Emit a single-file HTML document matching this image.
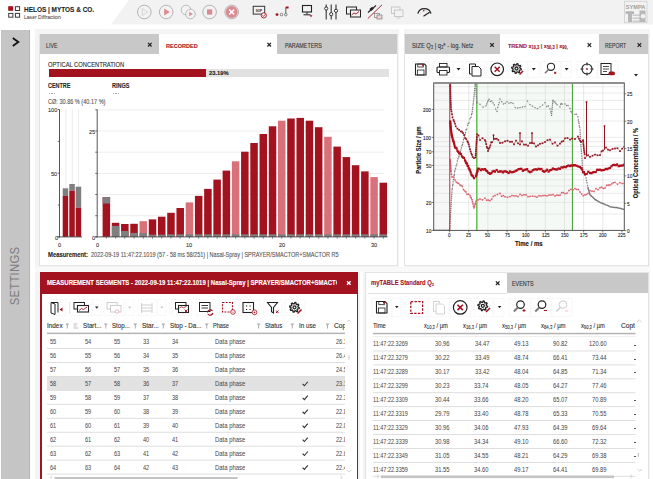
<!DOCTYPE html><html><head><meta charset="utf-8"><style>
*{margin:0;padding:0;box-sizing:border-box}
html,body{width:653px;height:479px;overflow:hidden;background:#fff;font-family:"Liberation Sans",sans-serif;color:#333}
.ab{position:absolute}
.t{position:absolute;white-space:nowrap;line-height:1;transform-origin:0 0;-webkit-text-stroke:0.1px currentColor}
svg{position:absolute;overflow:visible}
</style></head><body>
<svg class="ab" style="left:0;top:0" width="653" height="29"><polygon points="129,0 653,0 653,24.5 111,24.5" fill="#f2f2f2"/></svg><svg style="left:0;top:0" width="30" height="20">
<rect x="8.2" y="6.2" width="5" height="4.6" fill="#a2121f"/>
<rect x="15.4" y="6.7" width="4.2" height="3.8" fill="none" stroke="#3a3a3a" stroke-width="1"/>
<rect x="8.7" y="13.4" width="4.2" height="3.8" fill="none" stroke="#3a3a3a" stroke-width="1"/>
<rect x="15.4" y="13.4" width="4.2" height="3.8" fill="none" stroke="#3a3a3a" stroke-width="1"/>
</svg><div class="t" style="left:24.28px;top:6.19px;font-size:6.983px;color:#1e1e1e;font-weight:bold;transform:scaleX(0.925);">HELOS | MYTOS &amp; CO.</div><div class="t" style="left:23.89px;top:13.70px;font-size:6.145px;color:#555;transform:scaleX(0.825);">Laser Diffraction</div><svg style="left:624px;top:1px" width="24" height="22">
<rect x="0.5" y="0.3" width="22.5" height="21.4" fill="none" stroke="#d2d2d2" stroke-width="0.9"/>
<text x="11.6" y="8.3" font-size="5.2" text-anchor="middle" fill="#a0a0a0" font-family="Liberation Sans" font-weight="bold" textLength="19.5" lengthAdjust="spacingAndGlyphs">SYMPA</text>
<rect x="1.6" y="10.4" width="8.4" height="2.4" fill="#b0b0b0"/><rect x="4" y="10.4" width="4" height="10.6" fill="#b8b8b8"/>
<rect x="8.5" y="13.5" width="7.5" height="1.3" fill="#c4c4c4"/><rect x="8.5" y="16.5" width="7.5" height="1.3" fill="#c4c4c4"/><rect x="8.5" y="19.5" width="7.5" height="1.3" fill="#c4c4c4"/>
<rect x="15.5" y="9.5" width="6" height="11.5" fill="#b8b8b8"/><circle cx="19" cy="15.2" r="2.3" fill="#f2f2f2"/>
</svg><svg style="left:0;top:0" width="653" height="26"><circle cx="144.3" cy="12" r="6.8" fill="none" stroke="#b4b4b4" stroke-width="1"/><circle cx="166.2" cy="12" r="6.8" fill="none" stroke="#b4b4b4" stroke-width="1"/><circle cx="209.6" cy="12" r="6.8" fill="none" stroke="#b4b4b4" stroke-width="1"/><circle cx="231.7" cy="12" r="6.8" fill="none" stroke="#b4b4b4" stroke-width="1"/><polygon points="142.3,8.5 147.6,12 142.3,15.5" fill="none" stroke="#d0d0d0" stroke-width="0.8"/><polygon points="164.2,8.6 169.8,12 164.2,15.4" fill="#d98a93"/><circle cx="186" cy="10" r="4.8" fill="none" stroke="#b4b4b4" stroke-width="0.9"/><circle cx="190.5" cy="14" r="4.8" fill="#f2f2f2" stroke="#b4b4b4" stroke-width="0.9"/><polygon points="189.2,11.8 192.8,14 189.2,16.2" fill="#d98a93"/><rect x="207" y="9.4" width="5.2" height="5.2" fill="#d98a93"/><circle cx="231.7" cy="12" r="6" fill="#d98a93"/><path d="M229.2,9.5 L234.2,14.5 M234.2,9.5 L229.2,14.5" stroke="#fff" stroke-width="1.6"/><rect x="253.2" y="6.3" width="11.5" height="7.8" fill="none" stroke="#333" stroke-width="1"/><text x="258.9" y="11.6" font-size="3.6" text-anchor="middle" fill="#222" font-weight="bold" font-family="Liberation Sans" textLength="6.5" lengthAdjust="spacingAndGlyphs">SOP</text><circle cx="263.8" cy="15.4" r="2.6" fill="#f2f2f2" stroke="#a2121f" stroke-width="0.9"/><path d="M262.5,15.4 l1,1 l1.7,-1.9" stroke="#a2121f" fill="none" stroke-width="0.8"/><circle cx="277" cy="14.6" r="1.4" fill="#a2121f"/><circle cx="281.5" cy="14.6" r="1.3" fill="none" stroke="#555" stroke-width="0.7"/><circle cx="285.8" cy="14.6" r="1.3" fill="none" stroke="#555" stroke-width="0.7"/><path d="M285.8,13.2 V7" stroke="#333" stroke-width="0.8"/><path d="M286,6.5 h2.6 v2 h-2.6z" fill="#a2121f"/><rect x="302.5" y="5.5" width="9" height="6.5" fill="none" stroke="#222" stroke-width="1.1"/><path d="M307,12 v2.5 M303.5,14.8 h7" stroke="#222" stroke-width="1"/><path d="M309.5,15.2 h3 l-1.5,2z" fill="#a2121f"/><path d="M326.2,4.5 v15 M331.2,4.5 v15 M336,4.5 v15" stroke="#222" stroke-width="1"/><circle cx="326.2" cy="8.5" r="1.6" fill="#fff" stroke="#222" stroke-width="0.9"/><circle cx="331.2" cy="14.2" r="1.6" fill="#fff" stroke="#222" stroke-width="0.9"/><circle cx="336" cy="10.8" r="1.6" fill="#fff" stroke="#222" stroke-width="0.9"/><rect x="346.5" y="7" width="10" height="7" fill="none" stroke="#222" stroke-width="1"/><rect x="350.5" y="10" width="10" height="7" fill="#f2f2f2" stroke="#222" stroke-width="1"/><path d="M351.5,15 l2.5,-2 l2,1 l3,-2.5" stroke="#a2121f" fill="none" stroke-width="0.9"/><path d="M368,12.5 l8,-7" stroke="#222" stroke-width="1.1"/><rect x="369.8" y="7.6" width="3.6" height="2.6" transform="rotate(-41 371.6 8.9)" fill="#222"/><path d="M367.8,18.6 l14.2,-13.8" stroke="#a2121f" stroke-width="0.9"/><rect x="374.5" y="13.5" width="5" height="4" fill="#f2f2f2" stroke="#888" stroke-width="0.8"/><rect x="377" y="15" width="5" height="4" fill="#f3d0d4" stroke="#888" stroke-width="0.8"/><rect x="391.5" y="7" width="8.5" height="6.5" fill="none" stroke="#c4c4c4" stroke-width="0.9"/><rect x="394.5" y="10" width="8.5" height="6.5" fill="#f2f2f2" stroke="#c4c4c4" stroke-width="0.9"/><path d="M396.5,18 h4" stroke="#c4c4c4" stroke-width="0.8"/><path d="M417.8,13.6 A6.9,6.9 0 0 1 431,13.6" fill="none" stroke="#222" stroke-width="1.2"/><path d="M420.2,14.2 A4.6,4.6 0 0 1 428.8,13" fill="none" stroke="#bbb" stroke-width="0.7" stroke-dasharray="0.8,0.8"/><circle cx="423.8" cy="10.8" r="0.8" fill="#a2121f"/><path d="M423.5,16.2 L429.6,12.2" stroke="#222" stroke-width="1.2"/></svg><div class="ab" style="left:1px;top:30px;width:29px;height:449px;background:#c5c5c5;"></div><div class="ab" style="left:29px;top:30px;width:1px;height:449px;background:#b4b4b4;"></div><svg style="left:0;top:0" width="40" height="60"><polyline points="12.8,38 18.3,42 12.8,46" fill="none" stroke="#111" stroke-width="1.8"/></svg><div class="t" style="left:14.5px;top:276px;font-size:13.5px;color:#7d7d7d;transform:translate(-50%,-50%) rotate(-90deg) scaleX(0.84);transform-origin:50% 50%;letter-spacing:0.3px;-webkit-text-stroke:0">SETTINGS</div><div class="ab" style="left:35px;top:29px;width:364px;height:239px;background:#f4f4f4;"></div><div class="ab" style="left:404px;top:29px;width:246px;height:239px;background:#f4f4f4;"></div><div class="ab" style="left:35px;top:268px;width:325px;height:211px;background:#f4f4f4;"></div><div class="ab" style="left:363px;top:268px;width:287px;height:211px;background:#f4f4f4;"></div><div class="ab" style="left:35px;top:266.5px;width:615px;height:5px;background:#f9f9f9;"></div><div class="ab" style="left:39.3px;top:33.5px;width:358.4px;height:232px;background:#fff;border:1px solid #e3e3e3"></div><div class="ab" style="left:404.3px;top:33.5px;width:244.5px;height:232px;background:#fff;border:1px solid #e3e3e3"></div><div class="ab" style="left:40px;top:272px;width:318px;height:207px;background:#fff;"></div><div class="ab" style="left:365.3px;top:271.5px;width:283.5px;height:210px;background:#fff;border:1px solid #e3e3e3"></div><div class="ab" style="left:40px;top:34px;width:119px;height:20px;background:#c8c8c8;"></div><div class="ab" style="left:159px;top:34px;width:118.3px;height:20px;background:#fff;"></div><div class="ab" style="left:277.3px;top:34px;width:119.7px;height:20px;background:#c8c8c8;"></div><div class="t" style="left:46.47px;top:42.88px;font-size:6.285px;color:#333;transform:scaleX(0.854);">LIVE</div><svg style="left:0;top:0" width="1" height="1"><path d="M148.0,42.900000000000006 L151.60000000000002,46.5 M151.60000000000002,42.900000000000006 L148.0,46.5" stroke="#222" stroke-width="1.2"/></svg><div class="t" style="left:165.64px;top:42.90px;font-size:6.145px;color:#a2121f;font-weight:bold;transform:scaleX(0.904);">RECORDED</div><svg style="left:0;top:0" width="1" height="1"><path d="M267.4,42.900000000000006 L271.0,46.5 M271.0,42.900000000000006 L267.4,46.5" stroke="#222" stroke-width="1.2"/></svg><div class="t" style="left:284.67px;top:42.88px;font-size:6.285px;color:#333;transform:scaleX(0.862);">PARAMETERS</div><div class="ab" style="left:405px;top:34px;width:95.3px;height:20px;background:#c8c8c8;"></div><div class="ab" style="left:500.3px;top:34px;width:98.7px;height:20px;background:#fff;"></div><div class="ab" style="left:599px;top:34px;width:49px;height:20px;background:#c8c8c8;"></div><div class="t" style="left:411.68px;top:42.86px;font-size:6.425px;color:#333;transform:scaleX(0.897);">SIZE Q<span style="font-size:72%;vertical-align:-1px">3</span> | q<span style="font-size:72%;vertical-align:-1px">3</span>* - log. Netz</div><svg style="left:0;top:0" width="1" height="1"><path d="M490.2,43.2 L493.8,46.8 M493.8,43.2 L490.2,46.8" stroke="#222" stroke-width="1.2"/></svg><div class="t" style="left:508.26px;top:42.90px;font-size:6.145px;color:#a2121f;font-weight:bold;transform:scaleX(0.898);">TREND x<span style="font-size:72%;vertical-align:-1px">10,3</span> | x<span style="font-size:72%;vertical-align:-1px">50,3</span> | x<span style="font-size:72%;vertical-align:-1px">90,</span></div><svg style="left:0;top:0" width="1" height="1"><path d="M587.6,43.2 L591.1999999999999,46.8 M591.1999999999999,43.2 L587.6,46.8" stroke="#222" stroke-width="1.2"/></svg><div class="t" style="left:604.59px;top:42.88px;font-size:6.285px;color:#333;transform:scaleX(0.814);">REPORT</div><svg style="left:0;top:0" width="1" height="1"><path d="M637.6,43.2 L641.1999999999999,46.8 M641.1999999999999,43.2 L637.6,46.8" stroke="#222" stroke-width="1.2"/></svg><div class="t" style="left:48.14px;top:61.83px;font-size:6.704px;color:#2a2a2a;transform:scaleX(0.864);">OPTICAL CONCENTRATION</div><div class="ab" style="left:48.9px;top:69px;width:157.2px;height:7.9px;background:#a2121f;"></div><div class="ab" style="left:206.1px;top:69.1px;width:182.8px;height:7.8px;background:#e1e1e1;"></div><div class="t" style="left:209.11px;top:70.40px;font-size:6.145px;color:#1a1a1a;font-weight:bold;transform:scaleX(0.940);">23.19%</div><div class="t" style="left:48.18px;top:83.08px;font-size:6.285px;color:#2a2a2a;font-weight:bold;transform:scaleX(0.872);">CENTRE</div><div class="t" style="left:112.45px;top:83.08px;font-size:6.285px;color:#2a2a2a;font-weight:bold;transform:scaleX(0.883);">RINGS</div><div class="ab" style="left:48.6px;top:93.1px;width:1.6px;height:1.0px;background:#a8a8a8;"></div><div class="ab" style="left:51.1px;top:93.1px;width:1.6px;height:1.0px;background:#a8a8a8;"></div><div class="ab" style="left:53.6px;top:93.1px;width:1.6px;height:1.0px;background:#a8a8a8;"></div><div class="ab" style="left:112.9px;top:93.1px;width:1.6px;height:1.0px;background:#a8a8a8;"></div><div class="ab" style="left:115.4px;top:93.1px;width:1.6px;height:1.0px;background:#a8a8a8;"></div><div class="ab" style="left:117.9px;top:93.1px;width:1.6px;height:1.0px;background:#a8a8a8;"></div><div class="t" style="left:48.14px;top:99.46px;font-size:6.425px;color:#555;transform:scaleX(0.867);">CØ: 30.86 % (40.17 %)</div><svg style="left:0;top:0" width="653" height="479"><line x1="65.9" y1="109.4" x2="65.9" y2="236.9" stroke="#e6e6e6" stroke-width="0.8"/><line x1="72.3" y1="109.4" x2="72.3" y2="236.9" stroke="#e6e6e6" stroke-width="0.8"/><line x1="78.6" y1="109.4" x2="78.6" y2="236.9" stroke="#e6e6e6" stroke-width="0.8"/><rect x="62.7" y="188.3" width="5.5" height="7.699999999999989" fill="#7f7f7f"/><rect x="62.7" y="196" width="5.5" height="40.900000000000006" fill="#a2121f"/><rect x="69.3" y="184" width="5.5" height="6.699999999999989" fill="#7f7f7f"/><rect x="69.3" y="190.7" width="5.5" height="46.20000000000002" fill="#a2121f"/><rect x="75.7" y="186.7" width="5.5" height="21.0" fill="#7f7f7f"/><rect x="75.7" y="207.7" width="5.5" height="29.200000000000017" fill="#a2121f"/><line x1="59.5" y1="109.4" x2="59.5" y2="237.4" stroke="#444" stroke-width="0.9"/><line x1="57.5" y1="236.9" x2="82" y2="236.9" stroke="#444" stroke-width="0.9"/><line x1="57.8" y1="109.5" x2="59.5" y2="109.5" stroke="#444" stroke-width="0.8"/><line x1="57.8" y1="141.35000000000002" x2="59.5" y2="141.35000000000002" stroke="#444" stroke-width="0.8"/><line x1="57.8" y1="173.2" x2="59.5" y2="173.2" stroke="#444" stroke-width="0.8"/><line x1="57.8" y1="205.05" x2="59.5" y2="205.05" stroke="#444" stroke-width="0.8"/><line x1="57.8" y1="236.9" x2="59.5" y2="236.9" stroke="#444" stroke-width="0.8"/><line x1="98" y1="215.72" x2="384" y2="215.72" stroke="#e8e8e8" stroke-width="0.8"/><line x1="98" y1="194.54" x2="384" y2="194.54" stroke="#e8e8e8" stroke-width="0.8"/><line x1="98" y1="173.36" x2="384" y2="173.36" stroke="#e8e8e8" stroke-width="0.8"/><line x1="98" y1="152.18" x2="384" y2="152.18" stroke="#e8e8e8" stroke-width="0.8"/><line x1="98" y1="131.00" x2="384" y2="131.00" stroke="#e8e8e8" stroke-width="0.8"/><line x1="98" y1="109.82" x2="384" y2="109.82" stroke="#e8e8e8" stroke-width="0.8"/><rect x="102.60" y="197.10" width="7.5" height="39.80" fill="#a2121f"/><rect x="102.60" y="197.1" width="7.5" height="6.4" fill="#7f7f7f"/><line x1="106.35" y1="236.9" x2="106.35" y2="238.70000000000002" stroke="#555" stroke-width="0.7"/><rect x="111.83" y="222.80" width="7.5" height="14.10" fill="#a2121f"/><rect x="111.83" y="225.90" width="7.5" height="11.00" fill="#7f7f7f"/><line x1="115.58" y1="236.9" x2="115.58" y2="238.70000000000002" stroke="#555" stroke-width="0.7"/><rect x="121.06" y="224.00" width="7.5" height="12.90" fill="#a2121f"/><rect x="121.06" y="231.00" width="7.5" height="5.90" fill="#7f7f7f"/><line x1="124.81" y1="236.9" x2="124.81" y2="238.70000000000002" stroke="#555" stroke-width="0.7"/><rect x="130.30" y="223.80" width="7.5" height="13.10" fill="#a2121f"/><rect x="130.30" y="232.90" width="7.5" height="4.00" fill="#7f7f7f"/><line x1="134.05" y1="236.9" x2="134.05" y2="238.70000000000002" stroke="#555" stroke-width="0.7"/><rect x="139.53" y="221.20" width="7.5" height="15.70" fill="#d9717b"/><rect x="139.53" y="233.10" width="7.5" height="3.80" fill="#7f7f7f"/><line x1="143.28" y1="236.9" x2="143.28" y2="238.70000000000002" stroke="#555" stroke-width="0.7"/><rect x="148.76" y="219.40" width="7.5" height="17.50" fill="#a2121f"/><rect x="148.76" y="234.70" width="7.5" height="2.20" fill="#7f7f7f"/><line x1="152.51" y1="236.9" x2="152.51" y2="238.70000000000002" stroke="#555" stroke-width="0.7"/><rect x="157.99" y="216.70" width="7.5" height="20.20" fill="#a2121f"/><rect x="157.99" y="234.70" width="7.5" height="2.20" fill="#7f7f7f"/><line x1="161.74" y1="236.9" x2="161.74" y2="238.70000000000002" stroke="#555" stroke-width="0.7"/><rect x="167.22" y="212.80" width="7.5" height="24.10" fill="#a2121f"/><rect x="167.22" y="234.30" width="7.5" height="2.60" fill="#7f7f7f"/><line x1="170.97" y1="236.9" x2="170.97" y2="238.70000000000002" stroke="#555" stroke-width="0.7"/><rect x="176.46" y="208.00" width="7.5" height="28.90" fill="#a2121f"/><rect x="176.46" y="234.30" width="7.5" height="2.60" fill="#7f7f7f"/><line x1="180.21" y1="236.9" x2="180.21" y2="238.70000000000002" stroke="#555" stroke-width="0.7"/><rect x="185.69" y="202.40" width="7.5" height="34.50" fill="#d9717b"/><rect x="185.69" y="234.30" width="7.5" height="2.60" fill="#7f7f7f"/><line x1="189.44" y1="236.9" x2="189.44" y2="238.70000000000002" stroke="#555" stroke-width="0.7"/><rect x="194.92" y="195.90" width="7.5" height="41.00" fill="#a2121f"/><rect x="194.92" y="234.30" width="7.5" height="2.60" fill="#7f7f7f"/><line x1="198.67" y1="236.9" x2="198.67" y2="238.70000000000002" stroke="#555" stroke-width="0.7"/><rect x="204.15" y="188.90" width="7.5" height="48.00" fill="#a2121f"/><rect x="204.15" y="234.30" width="7.5" height="2.60" fill="#7f7f7f"/><line x1="207.90" y1="236.9" x2="207.90" y2="238.70000000000002" stroke="#555" stroke-width="0.7"/><rect x="213.38" y="179.60" width="7.5" height="57.30" fill="#a2121f"/><rect x="213.38" y="234.30" width="7.5" height="2.60" fill="#7f7f7f"/><line x1="217.13" y1="236.9" x2="217.13" y2="238.70000000000002" stroke="#555" stroke-width="0.7"/><rect x="222.62" y="170.60" width="7.5" height="66.30" fill="#a2121f"/><rect x="222.62" y="234.30" width="7.5" height="2.60" fill="#7f7f7f"/><line x1="226.37" y1="236.9" x2="226.37" y2="238.70000000000002" stroke="#555" stroke-width="0.7"/><rect x="231.85" y="161.30" width="7.5" height="75.60" fill="#d9717b"/><rect x="231.85" y="234.30" width="7.5" height="2.60" fill="#7f7f7f"/><line x1="235.60" y1="236.9" x2="235.60" y2="238.70000000000002" stroke="#555" stroke-width="0.7"/><rect x="241.08" y="151.70" width="7.5" height="85.20" fill="#a2121f"/><rect x="241.08" y="234.30" width="7.5" height="2.60" fill="#7f7f7f"/><line x1="244.83" y1="236.9" x2="244.83" y2="238.70000000000002" stroke="#555" stroke-width="0.7"/><rect x="250.31" y="143.00" width="7.5" height="93.90" fill="#a2121f"/><rect x="250.31" y="234.30" width="7.5" height="2.60" fill="#7f7f7f"/><line x1="254.06" y1="236.9" x2="254.06" y2="238.70000000000002" stroke="#555" stroke-width="0.7"/><rect x="259.54" y="134.00" width="7.5" height="102.90" fill="#a2121f"/><rect x="259.54" y="234.30" width="7.5" height="2.60" fill="#7f7f7f"/><line x1="263.29" y1="236.9" x2="263.29" y2="238.70000000000002" stroke="#555" stroke-width="0.7"/><rect x="268.78" y="126.30" width="7.5" height="110.60" fill="#a2121f"/><rect x="268.78" y="234.30" width="7.5" height="2.60" fill="#7f7f7f"/><line x1="272.53" y1="236.9" x2="272.53" y2="238.70000000000002" stroke="#555" stroke-width="0.7"/><rect x="278.01" y="120.70" width="7.5" height="116.20" fill="#d9717b"/><rect x="278.01" y="234.30" width="7.5" height="2.60" fill="#7f7f7f"/><line x1="281.76" y1="236.9" x2="281.76" y2="238.70000000000002" stroke="#555" stroke-width="0.7"/><rect x="287.24" y="118.50" width="7.5" height="118.40" fill="#a2121f"/><rect x="287.24" y="234.30" width="7.5" height="2.60" fill="#7f7f7f"/><line x1="290.99" y1="236.9" x2="290.99" y2="238.70000000000002" stroke="#555" stroke-width="0.7"/><rect x="296.47" y="117.90" width="7.5" height="119.00" fill="#a2121f"/><rect x="296.47" y="234.30" width="7.5" height="2.60" fill="#7f7f7f"/><line x1="300.22" y1="236.9" x2="300.22" y2="238.70000000000002" stroke="#555" stroke-width="0.7"/><rect x="305.70" y="120.70" width="7.5" height="116.20" fill="#a2121f"/><rect x="305.70" y="234.30" width="7.5" height="2.60" fill="#7f7f7f"/><line x1="309.45" y1="236.9" x2="309.45" y2="238.70000000000002" stroke="#555" stroke-width="0.7"/><rect x="314.94" y="127.20" width="7.5" height="109.70" fill="#a2121f"/><rect x="314.94" y="234.30" width="7.5" height="2.60" fill="#7f7f7f"/><line x1="318.69" y1="236.9" x2="318.69" y2="238.70000000000002" stroke="#555" stroke-width="0.7"/><rect x="324.17" y="136.80" width="7.5" height="100.10" fill="#d9717b"/><rect x="324.17" y="234.30" width="7.5" height="2.60" fill="#7f7f7f"/><line x1="327.92" y1="236.9" x2="327.92" y2="238.70000000000002" stroke="#555" stroke-width="0.7"/><rect x="333.40" y="146.60" width="7.5" height="90.30" fill="#a2121f"/><rect x="333.40" y="234.30" width="7.5" height="2.60" fill="#7f7f7f"/><line x1="337.15" y1="236.9" x2="337.15" y2="238.70000000000002" stroke="#555" stroke-width="0.7"/><rect x="342.63" y="157.10" width="7.5" height="79.80" fill="#a2121f"/><rect x="342.63" y="234.30" width="7.5" height="2.60" fill="#7f7f7f"/><line x1="346.38" y1="236.9" x2="346.38" y2="238.70000000000002" stroke="#555" stroke-width="0.7"/><rect x="351.86" y="165.20" width="7.5" height="71.70" fill="#a2121f"/><rect x="351.86" y="234.30" width="7.5" height="2.60" fill="#7f7f7f"/><line x1="355.61" y1="236.9" x2="355.61" y2="238.70000000000002" stroke="#555" stroke-width="0.7"/><rect x="361.10" y="171.40" width="7.5" height="65.50" fill="#a2121f"/><rect x="361.10" y="234.30" width="7.5" height="2.60" fill="#7f7f7f"/><line x1="364.85" y1="236.9" x2="364.85" y2="238.70000000000002" stroke="#555" stroke-width="0.7"/><rect x="370.33" y="177.10" width="7.5" height="59.80" fill="#d9717b"/><rect x="370.33" y="234.30" width="7.5" height="2.60" fill="#7f7f7f"/><line x1="374.08" y1="236.9" x2="374.08" y2="238.70000000000002" stroke="#555" stroke-width="0.7"/><rect x="379.56" y="182.70" width="7.5" height="54.20" fill="#a2121f"/><rect x="379.56" y="234.30" width="7.5" height="2.60" fill="#7f7f7f"/><line x1="383.31" y1="236.9" x2="383.31" y2="238.70000000000002" stroke="#555" stroke-width="0.7"/><line x1="97.2" y1="109.4" x2="97.2" y2="237.4" stroke="#444" stroke-width="0.9"/><line x1="95" y1="236.9" x2="387.5" y2="236.9" stroke="#444" stroke-width="0.9"/><line x1="95.3" y1="236.90" x2="97.2" y2="236.90" stroke="#444" stroke-width="0.8"/><line x1="95.3" y1="215.72" x2="97.2" y2="215.72" stroke="#444" stroke-width="0.8"/><line x1="95.3" y1="194.54" x2="97.2" y2="194.54" stroke="#444" stroke-width="0.8"/><line x1="95.3" y1="173.36" x2="97.2" y2="173.36" stroke="#444" stroke-width="0.8"/><line x1="95.3" y1="152.18" x2="97.2" y2="152.18" stroke="#444" stroke-width="0.8"/><line x1="95.3" y1="131.00" x2="97.2" y2="131.00" stroke="#444" stroke-width="0.8"/><line x1="95.3" y1="109.82" x2="97.2" y2="109.82" stroke="#444" stroke-width="0.8"/></svg><div class="t" style="left:48.17px;top:107.10px;font-size:6.145px;color:#333;transform:scaleX(0.900);">100</div><div class="t" style="left:51.24px;top:170.50px;font-size:6.145px;color:#333;transform:scaleX(0.900);">50</div><div class="t" style="left:54.62px;top:234.70px;font-size:6.145px;color:#333;transform:scaleX(0.900);">0</div><div class="t" style="left:89.24px;top:128.60px;font-size:6.145px;color:#333;transform:scaleX(0.900);">25</div><div class="t" style="left:92.12px;top:234.70px;font-size:6.145px;color:#333;transform:scaleX(0.900);">0</div><div class="t" style="left:57.97px;top:242.40px;font-size:6.145px;color:#333;transform:scaleX(0.900);">0</div><div class="t" style="left:95.67px;top:242.40px;font-size:6.145px;color:#333;transform:scaleX(0.900);">0</div><div class="t" style="left:186.32px;top:242.40px;font-size:6.145px;color:#333;transform:scaleX(0.900);">10</div><div class="t" style="left:278.69px;top:242.40px;font-size:6.145px;color:#333;transform:scaleX(0.900);">20</div><div class="t" style="left:371.03px;top:242.40px;font-size:6.145px;color:#333;transform:scaleX(0.900);">30</div><div class="t" style="left:48.32px;top:252.28px;font-size:6.285px;color:#222;font-weight:bold;transform:scaleX(0.942);">Measurement:</div><div class="t" style="left:91.34px;top:252.28px;font-size:6.285px;color:#555;transform:scaleX(0.879);">2022-09-19 11:47:22.1019 (57 - 58 ms 58/251) | Nasal-Spray | SPRAYER/SMACTOR+SMACTOR R5</div><svg style="left:0;top:0" width="653" height="479"><defs><clipPath id="cc"><rect x="433.7" y="83.0" width="190.59999999999997" height="147.4"/></clipPath></defs><rect x="433.7" y="83.0" width="15.900000000000034" height="147.4" fill="#f6f7f6"/><rect x="477.5" y="83.0" width="94.89999999999998" height="147.4" fill="#f5f9f5"/><line x1="433.7" y1="214.02" x2="624.3" y2="214.02" stroke="#dcdcdc" stroke-width="0.6"/><line x1="433.7" y1="202.40" x2="624.3" y2="202.40" stroke="#dcdcdc" stroke-width="0.6"/><line x1="433.7" y1="193.39" x2="624.3" y2="193.39" stroke="#dcdcdc" stroke-width="0.6"/><line x1="433.7" y1="186.03" x2="624.3" y2="186.03" stroke="#dcdcdc" stroke-width="0.6"/><line x1="433.7" y1="179.80" x2="624.3" y2="179.80" stroke="#dcdcdc" stroke-width="0.6"/><line x1="433.7" y1="174.41" x2="624.3" y2="174.41" stroke="#dcdcdc" stroke-width="0.6"/><line x1="433.7" y1="169.65" x2="624.3" y2="169.65" stroke="#dcdcdc" stroke-width="0.6"/><line x1="433.7" y1="165.40" x2="624.3" y2="165.40" stroke="#dcdcdc" stroke-width="0.6"/><line x1="433.7" y1="158.03" x2="624.3" y2="158.03" stroke="#dcdcdc" stroke-width="0.6"/><line x1="433.7" y1="151.81" x2="624.3" y2="151.81" stroke="#dcdcdc" stroke-width="0.6"/><line x1="433.7" y1="146.41" x2="624.3" y2="146.41" stroke="#dcdcdc" stroke-width="0.6"/><line x1="433.7" y1="141.66" x2="624.3" y2="141.66" stroke="#dcdcdc" stroke-width="0.6"/><line x1="433.7" y1="137.40" x2="624.3" y2="137.40" stroke="#dcdcdc" stroke-width="0.6"/><line x1="433.7" y1="121.02" x2="624.3" y2="121.02" stroke="#dcdcdc" stroke-width="0.6"/><line x1="433.7" y1="109.40" x2="624.3" y2="109.40" stroke="#dcdcdc" stroke-width="0.6"/><line x1="433.7" y1="100.39" x2="624.3" y2="100.39" stroke="#dcdcdc" stroke-width="0.6"/><line x1="433.7" y1="93.03" x2="624.3" y2="93.03" stroke="#dcdcdc" stroke-width="0.6"/><line x1="433.7" y1="86.80" x2="624.3" y2="86.80" stroke="#dcdcdc" stroke-width="0.6"/><line x1="468.75" y1="83.0" x2="468.75" y2="230.4" stroke="#d6d6d6" stroke-width="0.6"/><line x1="487.90" y1="83.0" x2="487.90" y2="230.4" stroke="#d6d6d6" stroke-width="0.6"/><line x1="507.05" y1="83.0" x2="507.05" y2="230.4" stroke="#d6d6d6" stroke-width="0.6"/><line x1="526.20" y1="83.0" x2="526.20" y2="230.4" stroke="#d6d6d6" stroke-width="0.6"/><line x1="545.35" y1="83.0" x2="545.35" y2="230.4" stroke="#d6d6d6" stroke-width="0.6"/><line x1="564.50" y1="83.0" x2="564.50" y2="230.4" stroke="#d6d6d6" stroke-width="0.6"/><line x1="583.65" y1="83.0" x2="583.65" y2="230.4" stroke="#d6d6d6" stroke-width="0.6"/><line x1="602.80" y1="83.0" x2="602.80" y2="230.4" stroke="#d6d6d6" stroke-width="0.6"/><line x1="476.8" y1="83.0" x2="476.8" y2="230.4" stroke="#6cbf5a" stroke-width="1.6"/><line x1="572.4" y1="83.0" x2="572.4" y2="230.4" stroke="#3f9d32" stroke-width="1"/><line x1="433.7" y1="230" x2="449.6" y2="230" stroke="#888" stroke-width="1.2" stroke-dasharray="1.2,0.6"/><g clip-path="url(#cc)" opacity="1"><path d="M449.60,230.00 L449.73,227.66 L449.86,225.73 L449.99,223.37 L450.11,221.39 L450.24,219.21 L450.37,216.91 L450.50,214.93 L450.62,212.67 L450.75,210.73 L450.88,208.51 L451.00,206.40 L451.12,204.47 L451.25,202.62 L451.38,200.27 L451.50,198.16 L451.62,196.26 L451.75,194.38 L451.88,192.19 L452.00,189.95 L452.30,188.55 L452.60,185.63 L452.90,184.31 L453.20,181.84 L453.50,179.53 L453.80,177.41 L454.10,175.59 L454.40,174.25 L454.70,171.70 L455.00,170.01 L455.60,168.32 L456.20,165.80 L456.80,164.05 L457.40,161.01 L458.00,158.75 L458.57,156.98 L459.14,156.09 L459.71,153.87 L460.29,151.55 L460.86,150.05 L461.43,147.91 L462.00,145.59 L462.50,144.45 L463.00,142.52 L463.50,139.66 L464.00,138.04 L464.50,136.06 L465.00,134.75 L465.50,132.67 L466.00,129.69 L466.75,129.26 L467.50,125.30 L468.25,123.56 L469.00,122.70 L470.00,118.86 L471.00,117.42 L471.50,114.59 L472.00,113.42 L472.25,111.56 L472.50,109.35 L472.75,107.50 L473.00,104.94 L473.25,103.09 L473.50,100.99 L473.75,98.89 L474.00,96.70 L474.19,94.85 L474.38,92.92 L474.56,90.54 L474.75,88.50 L474.94,85.99 L475.12,84.24 L475.31,82.21 L475.50,80.23 L475.61,82.30 L475.72,84.15 L475.83,86.21 L475.94,88.41 L476.06,90.26 L476.17,92.46 L476.28,94.46 L476.39,96.50 L476.50,98.42 L476.67,100.93 L476.83,102.71 L477.00,102.30 L480.00,104.36 L483.00,107.17 L486.00,105.80 L486.75,103.91 L487.50,101.96 L488.25,100.57 L489.00,99.23 L490.33,101.49 L491.67,100.97 L493.00,102.86 L494.33,104.82 L495.67,109.13 L497.00,111.48 L497.75,107.39 L498.50,104.74 L499.25,102.61 L500.00,98.90 L501.75,101.69 L503.50,103.99 L505.25,103.21 L507.00,101.65 L509.00,103.12 L511.00,102.61 L513.00,103.33 L515.33,107.70 L517.67,107.92 L520.00,107.56 L522.50,107.00 L525.00,106.59 L527.50,101.03 L530.00,104.66 L532.50,106.12 L535.00,107.66 L537.50,108.62 L540.00,106.89 L542.50,105.14 L545.00,102.60 L546.67,106.71 L548.33,105.87 L550.00,108.87 L550.75,111.98 L551.50,115.45 L551.69,113.53 L551.88,111.31 L552.06,109.17 L552.25,107.20 L552.44,105.14 L552.62,103.28 L552.81,101.04 L553.00,100.19 L554.00,101.90 L555.00,101.90 L556.00,103.58 L557.00,104.74 L560.00,107.01 L560.67,104.26 L561.33,103.53 L562.00,104.23 L565.00,103.92 L566.50,105.51 L568.00,105.47 L570.00,108.46 L571.00,111.57 L572.00,112.71 L575.00,114.37 L576.50,114.15 L578.00,116.80 L578.33,119.94 L578.67,121.81 L579.00,123.35 L579.33,125.77 L579.67,127.30 L580.00,129.94 L580.12,132.30 L580.25,134.41 L580.38,136.43 L580.50,138.29 L580.62,140.35 L580.75,142.34 L580.88,144.69 L581.00,146.75 L581.20,149.23 L581.40,151.29 L581.60,153.45 L581.80,156.13 L582.00,158.58 L582.14,160.81 L582.29,163.02 L582.43,165.26 L582.57,167.46 L582.71,169.43 L582.86,171.74 L583.00,173.38 L584.50,174.45 L586.00,177.96 L586.50,180.51 L587.00,182.74 L587.50,185.70 L588.00,187.70" fill="none" stroke="#c8c8c8" stroke-width="0.5" stroke-linejoin="round"/><rect x="449.00" y="229.40" width="1.2" height="1.2" fill="#7a7a7a"/><rect x="449.13" y="227.06" width="1.2" height="1.2" fill="#7a7a7a"/><rect x="449.26" y="225.13" width="1.2" height="1.2" fill="#7a7a7a"/><rect x="449.39" y="222.77" width="1.2" height="1.2" fill="#7a7a7a"/><rect x="449.51" y="220.79" width="1.2" height="1.2" fill="#7a7a7a"/><rect x="449.64" y="218.61" width="1.2" height="1.2" fill="#7a7a7a"/><rect x="449.77" y="216.31" width="1.2" height="1.2" fill="#7a7a7a"/><rect x="449.90" y="214.33" width="1.2" height="1.2" fill="#7a7a7a"/><rect x="450.02" y="212.07" width="1.2" height="1.2" fill="#7a7a7a"/><rect x="450.15" y="210.13" width="1.2" height="1.2" fill="#7a7a7a"/><rect x="450.27" y="207.91" width="1.2" height="1.2" fill="#7a7a7a"/><rect x="450.40" y="205.80" width="1.2" height="1.2" fill="#7a7a7a"/><rect x="450.52" y="203.87" width="1.2" height="1.2" fill="#7a7a7a"/><rect x="450.65" y="202.02" width="1.2" height="1.2" fill="#7a7a7a"/><rect x="450.77" y="199.67" width="1.2" height="1.2" fill="#7a7a7a"/><rect x="450.90" y="197.56" width="1.2" height="1.2" fill="#7a7a7a"/><rect x="451.02" y="195.66" width="1.2" height="1.2" fill="#7a7a7a"/><rect x="451.15" y="193.78" width="1.2" height="1.2" fill="#7a7a7a"/><rect x="451.27" y="191.59" width="1.2" height="1.2" fill="#7a7a7a"/><rect x="451.40" y="189.35" width="1.2" height="1.2" fill="#7a7a7a"/><rect x="451.70" y="187.95" width="1.2" height="1.2" fill="#7a7a7a"/><rect x="452.00" y="185.03" width="1.2" height="1.2" fill="#7a7a7a"/><rect x="452.30" y="183.71" width="1.2" height="1.2" fill="#7a7a7a"/><rect x="452.60" y="181.24" width="1.2" height="1.2" fill="#7a7a7a"/><rect x="452.90" y="178.93" width="1.2" height="1.2" fill="#7a7a7a"/><rect x="453.20" y="176.81" width="1.2" height="1.2" fill="#7a7a7a"/><rect x="453.50" y="174.99" width="1.2" height="1.2" fill="#7a7a7a"/><rect x="453.80" y="173.65" width="1.2" height="1.2" fill="#7a7a7a"/><rect x="454.10" y="171.10" width="1.2" height="1.2" fill="#7a7a7a"/><rect x="454.40" y="169.41" width="1.2" height="1.2" fill="#7a7a7a"/><rect x="455.00" y="167.72" width="1.2" height="1.2" fill="#7a7a7a"/><rect x="455.60" y="165.20" width="1.2" height="1.2" fill="#7a7a7a"/><rect x="456.20" y="163.45" width="1.2" height="1.2" fill="#7a7a7a"/><rect x="456.80" y="160.41" width="1.2" height="1.2" fill="#7a7a7a"/><rect x="457.40" y="158.15" width="1.2" height="1.2" fill="#7a7a7a"/><rect x="457.97" y="156.38" width="1.2" height="1.2" fill="#7a7a7a"/><rect x="458.54" y="155.49" width="1.2" height="1.2" fill="#7a7a7a"/><rect x="459.11" y="153.27" width="1.2" height="1.2" fill="#7a7a7a"/><rect x="459.69" y="150.95" width="1.2" height="1.2" fill="#7a7a7a"/><rect x="460.26" y="149.45" width="1.2" height="1.2" fill="#7a7a7a"/><rect x="460.83" y="147.31" width="1.2" height="1.2" fill="#7a7a7a"/><rect x="461.40" y="144.99" width="1.2" height="1.2" fill="#7a7a7a"/><rect x="461.90" y="143.85" width="1.2" height="1.2" fill="#7a7a7a"/><rect x="462.40" y="141.92" width="1.2" height="1.2" fill="#7a7a7a"/><rect x="462.90" y="139.06" width="1.2" height="1.2" fill="#7a7a7a"/><rect x="463.40" y="137.44" width="1.2" height="1.2" fill="#7a7a7a"/><rect x="463.90" y="135.46" width="1.2" height="1.2" fill="#7a7a7a"/><rect x="464.40" y="134.15" width="1.2" height="1.2" fill="#7a7a7a"/><rect x="464.90" y="132.07" width="1.2" height="1.2" fill="#7a7a7a"/><rect x="465.40" y="129.09" width="1.2" height="1.2" fill="#7a7a7a"/><rect x="466.15" y="128.66" width="1.2" height="1.2" fill="#7a7a7a"/><rect x="466.90" y="124.70" width="1.2" height="1.2" fill="#7a7a7a"/><rect x="467.65" y="122.96" width="1.2" height="1.2" fill="#7a7a7a"/><rect x="468.40" y="122.10" width="1.2" height="1.2" fill="#7a7a7a"/><rect x="469.40" y="118.26" width="1.2" height="1.2" fill="#7a7a7a"/><rect x="470.40" y="116.82" width="1.2" height="1.2" fill="#7a7a7a"/><rect x="470.90" y="113.99" width="1.2" height="1.2" fill="#7a7a7a"/><rect x="471.40" y="112.82" width="1.2" height="1.2" fill="#7a7a7a"/><rect x="471.65" y="110.96" width="1.2" height="1.2" fill="#7a7a7a"/><rect x="471.90" y="108.75" width="1.2" height="1.2" fill="#7a7a7a"/><rect x="472.15" y="106.90" width="1.2" height="1.2" fill="#7a7a7a"/><rect x="472.40" y="104.34" width="1.2" height="1.2" fill="#7a7a7a"/><rect x="472.65" y="102.49" width="1.2" height="1.2" fill="#7a7a7a"/><rect x="472.90" y="100.39" width="1.2" height="1.2" fill="#7a7a7a"/><rect x="473.15" y="98.29" width="1.2" height="1.2" fill="#7a7a7a"/><rect x="473.40" y="96.10" width="1.2" height="1.2" fill="#7a7a7a"/><rect x="473.59" y="94.25" width="1.2" height="1.2" fill="#7a7a7a"/><rect x="473.77" y="92.32" width="1.2" height="1.2" fill="#7a7a7a"/><rect x="473.96" y="89.94" width="1.2" height="1.2" fill="#7a7a7a"/><rect x="474.15" y="87.90" width="1.2" height="1.2" fill="#7a7a7a"/><rect x="474.34" y="85.39" width="1.2" height="1.2" fill="#7a7a7a"/><rect x="474.52" y="83.64" width="1.2" height="1.2" fill="#7a7a7a"/><rect x="474.71" y="81.61" width="1.2" height="1.2" fill="#7a7a7a"/><rect x="474.90" y="79.63" width="1.2" height="1.2" fill="#7a7a7a"/><rect x="475.01" y="81.70" width="1.2" height="1.2" fill="#7a7a7a"/><rect x="475.12" y="83.55" width="1.2" height="1.2" fill="#7a7a7a"/><rect x="475.23" y="85.61" width="1.2" height="1.2" fill="#7a7a7a"/><rect x="475.34" y="87.81" width="1.2" height="1.2" fill="#7a7a7a"/><rect x="475.46" y="89.66" width="1.2" height="1.2" fill="#7a7a7a"/><rect x="475.57" y="91.86" width="1.2" height="1.2" fill="#7a7a7a"/><rect x="475.68" y="93.86" width="1.2" height="1.2" fill="#7a7a7a"/><rect x="475.79" y="95.90" width="1.2" height="1.2" fill="#7a7a7a"/><rect x="475.90" y="97.82" width="1.2" height="1.2" fill="#7a7a7a"/><rect x="476.07" y="100.33" width="1.2" height="1.2" fill="#7a7a7a"/><rect x="476.23" y="102.11" width="1.2" height="1.2" fill="#7a7a7a"/><rect x="476.40" y="101.70" width="1.2" height="1.2" fill="#7a7a7a"/><rect x="479.40" y="103.76" width="1.2" height="1.2" fill="#7a7a7a"/><rect x="482.40" y="106.57" width="1.2" height="1.2" fill="#7a7a7a"/><rect x="485.40" y="105.20" width="1.2" height="1.2" fill="#7a7a7a"/><rect x="486.15" y="103.31" width="1.2" height="1.2" fill="#7a7a7a"/><rect x="486.90" y="101.36" width="1.2" height="1.2" fill="#7a7a7a"/><rect x="487.65" y="99.97" width="1.2" height="1.2" fill="#7a7a7a"/><rect x="488.40" y="98.63" width="1.2" height="1.2" fill="#7a7a7a"/><rect x="489.73" y="100.89" width="1.2" height="1.2" fill="#7a7a7a"/><rect x="491.07" y="100.37" width="1.2" height="1.2" fill="#7a7a7a"/><rect x="492.40" y="102.26" width="1.2" height="1.2" fill="#7a7a7a"/><rect x="493.73" y="104.22" width="1.2" height="1.2" fill="#7a7a7a"/><rect x="495.07" y="108.53" width="1.2" height="1.2" fill="#7a7a7a"/><rect x="496.40" y="110.88" width="1.2" height="1.2" fill="#7a7a7a"/><rect x="497.15" y="106.79" width="1.2" height="1.2" fill="#7a7a7a"/><rect x="497.90" y="104.14" width="1.2" height="1.2" fill="#7a7a7a"/><rect x="498.65" y="102.01" width="1.2" height="1.2" fill="#7a7a7a"/><rect x="499.40" y="98.30" width="1.2" height="1.2" fill="#7a7a7a"/><rect x="501.15" y="101.09" width="1.2" height="1.2" fill="#7a7a7a"/><rect x="502.90" y="103.39" width="1.2" height="1.2" fill="#7a7a7a"/><rect x="504.65" y="102.61" width="1.2" height="1.2" fill="#7a7a7a"/><rect x="506.40" y="101.05" width="1.2" height="1.2" fill="#7a7a7a"/><rect x="508.40" y="102.52" width="1.2" height="1.2" fill="#7a7a7a"/><rect x="510.40" y="102.01" width="1.2" height="1.2" fill="#7a7a7a"/><rect x="512.40" y="102.73" width="1.2" height="1.2" fill="#7a7a7a"/><rect x="514.73" y="107.10" width="1.2" height="1.2" fill="#7a7a7a"/><rect x="517.07" y="107.32" width="1.2" height="1.2" fill="#7a7a7a"/><rect x="519.40" y="106.96" width="1.2" height="1.2" fill="#7a7a7a"/><rect x="521.90" y="106.40" width="1.2" height="1.2" fill="#7a7a7a"/><rect x="524.40" y="105.99" width="1.2" height="1.2" fill="#7a7a7a"/><rect x="526.90" y="100.43" width="1.2" height="1.2" fill="#7a7a7a"/><rect x="529.40" y="104.06" width="1.2" height="1.2" fill="#7a7a7a"/><rect x="531.90" y="105.52" width="1.2" height="1.2" fill="#7a7a7a"/><rect x="534.40" y="107.06" width="1.2" height="1.2" fill="#7a7a7a"/><rect x="536.90" y="108.02" width="1.2" height="1.2" fill="#7a7a7a"/><rect x="539.40" y="106.29" width="1.2" height="1.2" fill="#7a7a7a"/><rect x="541.90" y="104.54" width="1.2" height="1.2" fill="#7a7a7a"/><rect x="544.40" y="102.00" width="1.2" height="1.2" fill="#7a7a7a"/><rect x="546.07" y="106.11" width="1.2" height="1.2" fill="#7a7a7a"/><rect x="547.73" y="105.27" width="1.2" height="1.2" fill="#7a7a7a"/><rect x="549.40" y="108.27" width="1.2" height="1.2" fill="#7a7a7a"/><rect x="550.15" y="111.38" width="1.2" height="1.2" fill="#7a7a7a"/><rect x="550.90" y="114.85" width="1.2" height="1.2" fill="#7a7a7a"/><rect x="551.09" y="112.93" width="1.2" height="1.2" fill="#7a7a7a"/><rect x="551.27" y="110.71" width="1.2" height="1.2" fill="#7a7a7a"/><rect x="551.46" y="108.57" width="1.2" height="1.2" fill="#7a7a7a"/><rect x="551.65" y="106.60" width="1.2" height="1.2" fill="#7a7a7a"/><rect x="551.84" y="104.54" width="1.2" height="1.2" fill="#7a7a7a"/><rect x="552.02" y="102.68" width="1.2" height="1.2" fill="#7a7a7a"/><rect x="552.21" y="100.44" width="1.2" height="1.2" fill="#7a7a7a"/><rect x="552.40" y="99.59" width="1.2" height="1.2" fill="#7a7a7a"/><rect x="553.40" y="101.30" width="1.2" height="1.2" fill="#7a7a7a"/><rect x="554.40" y="101.30" width="1.2" height="1.2" fill="#7a7a7a"/><rect x="555.40" y="102.98" width="1.2" height="1.2" fill="#7a7a7a"/><rect x="556.40" y="104.14" width="1.2" height="1.2" fill="#7a7a7a"/><rect x="559.40" y="106.41" width="1.2" height="1.2" fill="#7a7a7a"/><rect x="560.07" y="103.66" width="1.2" height="1.2" fill="#7a7a7a"/><rect x="560.73" y="102.93" width="1.2" height="1.2" fill="#7a7a7a"/><rect x="561.40" y="103.63" width="1.2" height="1.2" fill="#7a7a7a"/><rect x="564.40" y="103.32" width="1.2" height="1.2" fill="#7a7a7a"/><rect x="565.90" y="104.91" width="1.2" height="1.2" fill="#7a7a7a"/><rect x="567.40" y="104.87" width="1.2" height="1.2" fill="#7a7a7a"/><rect x="569.40" y="107.86" width="1.2" height="1.2" fill="#7a7a7a"/><rect x="570.40" y="110.97" width="1.2" height="1.2" fill="#7a7a7a"/><rect x="571.40" y="112.11" width="1.2" height="1.2" fill="#7a7a7a"/><rect x="574.40" y="113.77" width="1.2" height="1.2" fill="#7a7a7a"/><rect x="575.90" y="113.55" width="1.2" height="1.2" fill="#7a7a7a"/><rect x="577.40" y="116.20" width="1.2" height="1.2" fill="#7a7a7a"/><rect x="577.73" y="119.34" width="1.2" height="1.2" fill="#7a7a7a"/><rect x="578.07" y="121.21" width="1.2" height="1.2" fill="#7a7a7a"/><rect x="578.40" y="122.75" width="1.2" height="1.2" fill="#7a7a7a"/><rect x="578.73" y="125.17" width="1.2" height="1.2" fill="#7a7a7a"/><rect x="579.07" y="126.70" width="1.2" height="1.2" fill="#7a7a7a"/><rect x="579.40" y="129.34" width="1.2" height="1.2" fill="#7a7a7a"/><rect x="579.52" y="131.70" width="1.2" height="1.2" fill="#7a7a7a"/><rect x="579.65" y="133.81" width="1.2" height="1.2" fill="#7a7a7a"/><rect x="579.77" y="135.83" width="1.2" height="1.2" fill="#7a7a7a"/><rect x="579.90" y="137.69" width="1.2" height="1.2" fill="#7a7a7a"/><rect x="580.02" y="139.75" width="1.2" height="1.2" fill="#7a7a7a"/><rect x="580.15" y="141.74" width="1.2" height="1.2" fill="#7a7a7a"/><rect x="580.27" y="144.09" width="1.2" height="1.2" fill="#7a7a7a"/><rect x="580.40" y="146.15" width="1.2" height="1.2" fill="#7a7a7a"/><rect x="580.60" y="148.63" width="1.2" height="1.2" fill="#7a7a7a"/><rect x="580.80" y="150.69" width="1.2" height="1.2" fill="#7a7a7a"/><rect x="581.00" y="152.85" width="1.2" height="1.2" fill="#7a7a7a"/><rect x="581.20" y="155.53" width="1.2" height="1.2" fill="#7a7a7a"/><rect x="581.40" y="157.98" width="1.2" height="1.2" fill="#7a7a7a"/><rect x="581.54" y="160.21" width="1.2" height="1.2" fill="#7a7a7a"/><rect x="581.69" y="162.42" width="1.2" height="1.2" fill="#7a7a7a"/><rect x="581.83" y="164.66" width="1.2" height="1.2" fill="#7a7a7a"/><rect x="581.97" y="166.86" width="1.2" height="1.2" fill="#7a7a7a"/><rect x="582.11" y="168.83" width="1.2" height="1.2" fill="#7a7a7a"/><rect x="582.26" y="171.14" width="1.2" height="1.2" fill="#7a7a7a"/><rect x="582.40" y="172.78" width="1.2" height="1.2" fill="#7a7a7a"/><rect x="583.90" y="173.85" width="1.2" height="1.2" fill="#7a7a7a"/><rect x="585.40" y="177.36" width="1.2" height="1.2" fill="#7a7a7a"/><rect x="585.90" y="179.91" width="1.2" height="1.2" fill="#7a7a7a"/><rect x="586.40" y="182.14" width="1.2" height="1.2" fill="#7a7a7a"/><rect x="586.90" y="185.10" width="1.2" height="1.2" fill="#7a7a7a"/><rect x="587.40" y="187.10" width="1.2" height="1.2" fill="#7a7a7a"/></g><g clip-path="url(#cc)" opacity="1"><path d="M588.00,187.70 L588.50,189.43 L589.00,191.18 L589.50,192.91 L590.00,194.81 L591.25,195.92 L592.50,197.07 L593.75,198.29 L595.00,199.49 L596.67,200.28 L598.33,201.28 L600.00,202.34 L601.43,203.05 L602.86,203.55 L604.29,204.18 L605.71,204.87 L607.14,205.20 L608.57,205.92 L610.00,206.72 L611.67,207.04 L613.33,207.33 L615.00,207.49 L616.67,207.55 L618.33,208.01 L620.00,208.17 L622.15,208.98 L624.30,209.50" fill="none" stroke="#7c7c7c" stroke-width="1.5" stroke-linejoin="round"/></g><g clip-path="url(#cc)" opacity="1"><path d="M450.30,160.00 L450.40,161.72 L450.50,163.41 L450.60,165.23 L450.70,166.93 L450.80,168.52 L450.90,170.19 L451.00,171.58 L451.50,174.23 L452.00,176.90 L453.50,177.19 L455.00,180.12 L456.25,182.22 L457.50,183.04 L458.75,183.50 L460.00,185.08 L461.17,185.48 L462.33,186.26 L463.50,189.69 L464.67,190.90 L465.83,191.90 L467.00,194.39 L468.50,194.22 L470.00,195.53 L470.67,197.26 L471.33,198.13 L472.00,199.75 L472.50,201.80 L473.00,203.80 L473.50,206.13 L474.00,207.95 L474.50,206.34 L475.00,204.38 L475.50,203.39 L476.00,201.22 L478.00,199.92 L480.00,199.03 L482.50,199.91 L485.00,198.15 L486.67,200.22 L488.33,200.09 L490.00,200.69 L491.67,199.19 L493.33,196.36 L495.00,195.49 L497.50,194.46 L500.00,193.32 L501.67,196.36 L503.33,195.54 L505.00,196.69 L507.50,197.33 L510.00,196.61 L512.00,195.54 L514.00,195.80 L516.00,195.89 L518.00,196.63 L520.00,194.31 L522.00,195.45 L524.00,194.78 L526.00,194.80 L528.00,196.69 L530.00,196.42 L532.50,196.09 L535.00,196.42 L537.00,197.19 L539.00,195.73 L541.00,195.91 L543.00,195.57 L545.00,195.49 L547.00,195.94 L549.00,195.08 L551.00,194.99 L553.00,194.64 L555.00,196.03 L556.67,195.24 L558.33,195.33 L560.00,195.29 L561.67,192.61 L563.33,192.56 L565.00,193.61 L567.00,193.33 L569.00,190.50 L571.00,189.35 L573.00,189.88 L575.00,188.56 L576.67,189.43 L578.33,189.54 L580.00,192.01 L581.67,193.98 L583.33,195.70 L585.00,194.85 L586.50,194.52 L588.00,193.42 L590.00,190.61 L592.00,191.21 L594.00,191.48 L596.00,188.56 L598.00,189.76 L600.00,187.78 L601.67,187.25 L603.33,188.53 L605.00,188.07 L606.67,185.29 L608.33,185.09 L610.00,185.02 L611.67,183.96 L613.33,182.76 L615.00,182.38 L617.50,184.28 L620.00,182.64 L622.15,183.52 L624.30,183.40" fill="none" stroke="#e08a94" stroke-width="0.6" stroke-linejoin="round"/><rect x="449.55" y="159.25" width="1.5" height="1.5" fill="#d9606d"/><rect x="449.65" y="160.97" width="1.5" height="1.5" fill="#d9606d"/><rect x="449.75" y="162.66" width="1.5" height="1.5" fill="#d9606d"/><rect x="449.85" y="164.48" width="1.5" height="1.5" fill="#d9606d"/><rect x="449.95" y="166.18" width="1.5" height="1.5" fill="#d9606d"/><rect x="450.05" y="167.77" width="1.5" height="1.5" fill="#d9606d"/><rect x="450.15" y="169.44" width="1.5" height="1.5" fill="#d9606d"/><rect x="450.25" y="170.83" width="1.5" height="1.5" fill="#d9606d"/><rect x="450.75" y="173.48" width="1.5" height="1.5" fill="#d9606d"/><rect x="451.25" y="176.15" width="1.5" height="1.5" fill="#d9606d"/><rect x="452.75" y="176.44" width="1.5" height="1.5" fill="#d9606d"/><rect x="454.25" y="179.37" width="1.5" height="1.5" fill="#d9606d"/><rect x="455.50" y="181.47" width="1.5" height="1.5" fill="#d9606d"/><rect x="456.75" y="182.29" width="1.5" height="1.5" fill="#d9606d"/><rect x="458.00" y="182.75" width="1.5" height="1.5" fill="#d9606d"/><rect x="459.25" y="184.33" width="1.5" height="1.5" fill="#d9606d"/><rect x="460.42" y="184.73" width="1.5" height="1.5" fill="#d9606d"/><rect x="461.58" y="185.51" width="1.5" height="1.5" fill="#d9606d"/><rect x="462.75" y="188.94" width="1.5" height="1.5" fill="#d9606d"/><rect x="463.92" y="190.15" width="1.5" height="1.5" fill="#d9606d"/><rect x="465.08" y="191.15" width="1.5" height="1.5" fill="#d9606d"/><rect x="466.25" y="193.64" width="1.5" height="1.5" fill="#d9606d"/><rect x="467.75" y="193.47" width="1.5" height="1.5" fill="#d9606d"/><rect x="469.25" y="194.78" width="1.5" height="1.5" fill="#d9606d"/><rect x="469.92" y="196.51" width="1.5" height="1.5" fill="#d9606d"/><rect x="470.58" y="197.38" width="1.5" height="1.5" fill="#d9606d"/><rect x="471.25" y="199.00" width="1.5" height="1.5" fill="#d9606d"/><rect x="471.75" y="201.05" width="1.5" height="1.5" fill="#d9606d"/><rect x="472.25" y="203.05" width="1.5" height="1.5" fill="#d9606d"/><rect x="472.75" y="205.38" width="1.5" height="1.5" fill="#d9606d"/><rect x="473.25" y="207.20" width="1.5" height="1.5" fill="#d9606d"/><rect x="473.75" y="205.59" width="1.5" height="1.5" fill="#d9606d"/><rect x="474.25" y="203.63" width="1.5" height="1.5" fill="#d9606d"/><rect x="474.75" y="202.64" width="1.5" height="1.5" fill="#d9606d"/><rect x="475.25" y="200.47" width="1.5" height="1.5" fill="#d9606d"/><rect x="477.25" y="199.17" width="1.5" height="1.5" fill="#d9606d"/><rect x="479.25" y="198.28" width="1.5" height="1.5" fill="#d9606d"/><rect x="481.75" y="199.16" width="1.5" height="1.5" fill="#d9606d"/><rect x="484.25" y="197.40" width="1.5" height="1.5" fill="#d9606d"/><rect x="485.92" y="199.47" width="1.5" height="1.5" fill="#d9606d"/><rect x="487.58" y="199.34" width="1.5" height="1.5" fill="#d9606d"/><rect x="489.25" y="199.94" width="1.5" height="1.5" fill="#d9606d"/><rect x="490.92" y="198.44" width="1.5" height="1.5" fill="#d9606d"/><rect x="492.58" y="195.61" width="1.5" height="1.5" fill="#d9606d"/><rect x="494.25" y="194.74" width="1.5" height="1.5" fill="#d9606d"/><rect x="496.75" y="193.71" width="1.5" height="1.5" fill="#d9606d"/><rect x="499.25" y="192.57" width="1.5" height="1.5" fill="#d9606d"/><rect x="500.92" y="195.61" width="1.5" height="1.5" fill="#d9606d"/><rect x="502.58" y="194.79" width="1.5" height="1.5" fill="#d9606d"/><rect x="504.25" y="195.94" width="1.5" height="1.5" fill="#d9606d"/><rect x="506.75" y="196.58" width="1.5" height="1.5" fill="#d9606d"/><rect x="509.25" y="195.86" width="1.5" height="1.5" fill="#d9606d"/><rect x="511.25" y="194.79" width="1.5" height="1.5" fill="#d9606d"/><rect x="513.25" y="195.05" width="1.5" height="1.5" fill="#d9606d"/><rect x="515.25" y="195.14" width="1.5" height="1.5" fill="#d9606d"/><rect x="517.25" y="195.88" width="1.5" height="1.5" fill="#d9606d"/><rect x="519.25" y="193.56" width="1.5" height="1.5" fill="#d9606d"/><rect x="521.25" y="194.70" width="1.5" height="1.5" fill="#d9606d"/><rect x="523.25" y="194.03" width="1.5" height="1.5" fill="#d9606d"/><rect x="525.25" y="194.05" width="1.5" height="1.5" fill="#d9606d"/><rect x="527.25" y="195.94" width="1.5" height="1.5" fill="#d9606d"/><rect x="529.25" y="195.67" width="1.5" height="1.5" fill="#d9606d"/><rect x="531.75" y="195.34" width="1.5" height="1.5" fill="#d9606d"/><rect x="534.25" y="195.67" width="1.5" height="1.5" fill="#d9606d"/><rect x="536.25" y="196.44" width="1.5" height="1.5" fill="#d9606d"/><rect x="538.25" y="194.98" width="1.5" height="1.5" fill="#d9606d"/><rect x="540.25" y="195.16" width="1.5" height="1.5" fill="#d9606d"/><rect x="542.25" y="194.82" width="1.5" height="1.5" fill="#d9606d"/><rect x="544.25" y="194.74" width="1.5" height="1.5" fill="#d9606d"/><rect x="546.25" y="195.19" width="1.5" height="1.5" fill="#d9606d"/><rect x="548.25" y="194.33" width="1.5" height="1.5" fill="#d9606d"/><rect x="550.25" y="194.24" width="1.5" height="1.5" fill="#d9606d"/><rect x="552.25" y="193.89" width="1.5" height="1.5" fill="#d9606d"/><rect x="554.25" y="195.28" width="1.5" height="1.5" fill="#d9606d"/><rect x="555.92" y="194.49" width="1.5" height="1.5" fill="#d9606d"/><rect x="557.58" y="194.58" width="1.5" height="1.5" fill="#d9606d"/><rect x="559.25" y="194.54" width="1.5" height="1.5" fill="#d9606d"/><rect x="560.92" y="191.86" width="1.5" height="1.5" fill="#d9606d"/><rect x="562.58" y="191.81" width="1.5" height="1.5" fill="#d9606d"/><rect x="564.25" y="192.86" width="1.5" height="1.5" fill="#d9606d"/><rect x="566.25" y="192.58" width="1.5" height="1.5" fill="#d9606d"/><rect x="568.25" y="189.75" width="1.5" height="1.5" fill="#d9606d"/><rect x="570.25" y="188.60" width="1.5" height="1.5" fill="#d9606d"/><rect x="572.25" y="189.13" width="1.5" height="1.5" fill="#d9606d"/><rect x="574.25" y="187.81" width="1.5" height="1.5" fill="#d9606d"/><rect x="575.92" y="188.68" width="1.5" height="1.5" fill="#d9606d"/><rect x="577.58" y="188.79" width="1.5" height="1.5" fill="#d9606d"/><rect x="579.25" y="191.26" width="1.5" height="1.5" fill="#d9606d"/><rect x="580.92" y="193.23" width="1.5" height="1.5" fill="#d9606d"/><rect x="582.58" y="194.95" width="1.5" height="1.5" fill="#d9606d"/><rect x="584.25" y="194.10" width="1.5" height="1.5" fill="#d9606d"/><rect x="585.75" y="193.77" width="1.5" height="1.5" fill="#d9606d"/><rect x="587.25" y="192.67" width="1.5" height="1.5" fill="#d9606d"/><rect x="589.25" y="189.86" width="1.5" height="1.5" fill="#d9606d"/><rect x="591.25" y="190.46" width="1.5" height="1.5" fill="#d9606d"/><rect x="593.25" y="190.73" width="1.5" height="1.5" fill="#d9606d"/><rect x="595.25" y="187.81" width="1.5" height="1.5" fill="#d9606d"/><rect x="597.25" y="189.01" width="1.5" height="1.5" fill="#d9606d"/><rect x="599.25" y="187.03" width="1.5" height="1.5" fill="#d9606d"/><rect x="600.92" y="186.50" width="1.5" height="1.5" fill="#d9606d"/><rect x="602.58" y="187.78" width="1.5" height="1.5" fill="#d9606d"/><rect x="604.25" y="187.32" width="1.5" height="1.5" fill="#d9606d"/><rect x="605.92" y="184.54" width="1.5" height="1.5" fill="#d9606d"/><rect x="607.58" y="184.34" width="1.5" height="1.5" fill="#d9606d"/><rect x="609.25" y="184.27" width="1.5" height="1.5" fill="#d9606d"/><rect x="610.92" y="183.21" width="1.5" height="1.5" fill="#d9606d"/><rect x="612.58" y="182.01" width="1.5" height="1.5" fill="#d9606d"/><rect x="614.25" y="181.63" width="1.5" height="1.5" fill="#d9606d"/><rect x="616.75" y="183.53" width="1.5" height="1.5" fill="#d9606d"/><rect x="619.25" y="181.89" width="1.5" height="1.5" fill="#d9606d"/><rect x="621.40" y="182.77" width="1.5" height="1.5" fill="#d9606d"/><rect x="623.55" y="182.65" width="1.5" height="1.5" fill="#d9606d"/></g><g clip-path="url(#cc)" opacity="1"><path d="M450.20,121.50 L450.33,122.78 L450.47,124.24 L450.60,125.76 L450.73,127.17 L450.87,128.46 L451.00,130.16 L451.25,131.85 L451.50,133.61 L451.75,134.93 L452.00,136.44 L452.43,137.65 L452.86,139.66 L453.29,140.82 L453.71,142.04 L454.14,143.66 L454.57,145.57 L455.00,147.42 L455.83,147.72 L456.67,148.48 L457.50,150.86 L458.33,151.84 L459.17,153.21 L460.00,153.35 L461.00,154.16 L462.00,156.45 L463.00,157.47 L464.00,157.94 L465.00,160.39 L465.62,161.60 L466.25,163.10 L466.88,163.54 L467.50,165.59 L468.12,166.11 L468.75,168.21 L469.38,169.23 L470.00,170.34 L470.67,172.24 L471.33,174.43 L472.00,175.51 L473.00,176.27 L474.00,178.09 L476.00,176.25 L476.40,174.74 L476.80,173.37 L477.20,171.92 L477.60,170.66 L478.00,168.71 L479.40,168.82 L480.80,170.21 L482.20,169.22 L483.60,169.56 L485.00,169.06 L486.00,170.44 L487.00,171.09 L488.00,172.58 L489.00,173.09 L490.20,173.90 L491.40,173.12 L492.60,171.42 L493.80,171.04 L495.00,171.68 L496.67,169.99 L498.33,171.80 L500.00,171.41 L501.43,171.39 L502.86,172.40 L504.29,171.38 L505.71,171.41 L507.14,171.97 L508.57,173.02 L510.00,171.41 L511.43,172.27 L512.86,172.06 L514.29,171.70 L515.71,170.81 L517.14,170.28 L518.57,169.15 L520.00,168.95 L521.43,168.80 L522.86,170.81 L524.29,170.00 L525.71,169.52 L527.14,169.18 L528.57,171.38 L530.00,172.16 L531.43,171.62 L532.86,170.17 L534.29,169.50 L535.71,169.33 L537.14,169.66 L538.57,168.74 L540.00,169.20 L541.43,168.96 L542.86,171.05 L544.29,171.79 L545.71,170.82 L547.14,169.71 L548.57,171.61 L550.00,170.30 L551.43,169.83 L552.86,168.50 L554.29,169.10 L555.71,169.43 L557.14,169.48 L558.57,168.47 L560.00,168.94 L561.43,167.37 L562.86,167.45 L564.29,166.75 L565.71,167.24 L567.14,166.13 L568.57,165.53 L570.00,166.07 L571.25,165.43 L572.50,165.72 L573.75,165.20 L575.00,165.22 L576.67,165.76 L578.33,166.51 L580.00,167.01 L581.00,168.04 L582.00,169.42 L583.00,171.88 L584.00,172.19 L585.00,174.45 L586.67,173.97 L588.33,171.73 L590.00,172.93 L591.43,173.25 L592.86,172.32 L594.29,172.09 L595.71,171.99 L597.14,169.75 L598.57,169.93 L600.00,169.67 L601.43,170.29 L602.86,170.13 L604.29,169.89 L605.71,168.85 L607.14,169.17 L608.57,168.40 L610.00,167.96 L611.43,166.32 L612.86,165.07 L614.29,164.82 L615.71,165.25 L617.14,164.45 L618.57,166.21 L620.00,165.74 L621.43,165.61 L622.87,165.38 L624.30,164.60" fill="none" stroke="#b3121f" stroke-width="1.0" stroke-linejoin="round"/><rect x="449.10" y="120.40" width="2.2" height="2.2" fill="#b0101d"/><rect x="449.23" y="121.68" width="2.2" height="2.2" fill="#b0101d"/><rect x="449.37" y="123.14" width="2.2" height="2.2" fill="#b0101d"/><rect x="449.50" y="124.66" width="2.2" height="2.2" fill="#b0101d"/><rect x="449.63" y="126.07" width="2.2" height="2.2" fill="#b0101d"/><rect x="449.77" y="127.36" width="2.2" height="2.2" fill="#b0101d"/><rect x="449.90" y="129.06" width="2.2" height="2.2" fill="#b0101d"/><rect x="450.15" y="130.75" width="2.2" height="2.2" fill="#b0101d"/><rect x="450.40" y="132.51" width="2.2" height="2.2" fill="#b0101d"/><rect x="450.65" y="133.83" width="2.2" height="2.2" fill="#b0101d"/><rect x="450.90" y="135.34" width="2.2" height="2.2" fill="#b0101d"/><rect x="451.33" y="136.55" width="2.2" height="2.2" fill="#b0101d"/><rect x="451.76" y="138.56" width="2.2" height="2.2" fill="#b0101d"/><rect x="452.19" y="139.72" width="2.2" height="2.2" fill="#b0101d"/><rect x="452.61" y="140.94" width="2.2" height="2.2" fill="#b0101d"/><rect x="453.04" y="142.56" width="2.2" height="2.2" fill="#b0101d"/><rect x="453.47" y="144.47" width="2.2" height="2.2" fill="#b0101d"/><rect x="453.90" y="146.32" width="2.2" height="2.2" fill="#b0101d"/><rect x="454.73" y="146.62" width="2.2" height="2.2" fill="#b0101d"/><rect x="455.57" y="147.38" width="2.2" height="2.2" fill="#b0101d"/><rect x="456.40" y="149.76" width="2.2" height="2.2" fill="#b0101d"/><rect x="457.23" y="150.74" width="2.2" height="2.2" fill="#b0101d"/><rect x="458.07" y="152.11" width="2.2" height="2.2" fill="#b0101d"/><rect x="458.90" y="152.25" width="2.2" height="2.2" fill="#b0101d"/><rect x="459.90" y="153.06" width="2.2" height="2.2" fill="#b0101d"/><rect x="460.90" y="155.35" width="2.2" height="2.2" fill="#b0101d"/><rect x="461.90" y="156.37" width="2.2" height="2.2" fill="#b0101d"/><rect x="462.90" y="156.84" width="2.2" height="2.2" fill="#b0101d"/><rect x="463.90" y="159.29" width="2.2" height="2.2" fill="#b0101d"/><rect x="464.52" y="160.50" width="2.2" height="2.2" fill="#b0101d"/><rect x="465.15" y="162.00" width="2.2" height="2.2" fill="#b0101d"/><rect x="465.77" y="162.44" width="2.2" height="2.2" fill="#b0101d"/><rect x="466.40" y="164.49" width="2.2" height="2.2" fill="#b0101d"/><rect x="467.02" y="165.01" width="2.2" height="2.2" fill="#b0101d"/><rect x="467.65" y="167.11" width="2.2" height="2.2" fill="#b0101d"/><rect x="468.27" y="168.13" width="2.2" height="2.2" fill="#b0101d"/><rect x="468.90" y="169.24" width="2.2" height="2.2" fill="#b0101d"/><rect x="469.57" y="171.14" width="2.2" height="2.2" fill="#b0101d"/><rect x="470.23" y="173.33" width="2.2" height="2.2" fill="#b0101d"/><rect x="470.90" y="174.41" width="2.2" height="2.2" fill="#b0101d"/><rect x="471.90" y="175.17" width="2.2" height="2.2" fill="#b0101d"/><rect x="472.90" y="176.99" width="2.2" height="2.2" fill="#b0101d"/><rect x="474.90" y="175.15" width="2.2" height="2.2" fill="#b0101d"/><rect x="475.30" y="173.64" width="2.2" height="2.2" fill="#b0101d"/><rect x="475.70" y="172.27" width="2.2" height="2.2" fill="#b0101d"/><rect x="476.10" y="170.82" width="2.2" height="2.2" fill="#b0101d"/><rect x="476.50" y="169.56" width="2.2" height="2.2" fill="#b0101d"/><rect x="476.90" y="167.61" width="2.2" height="2.2" fill="#b0101d"/><rect x="478.30" y="167.72" width="2.2" height="2.2" fill="#b0101d"/><rect x="479.70" y="169.11" width="2.2" height="2.2" fill="#b0101d"/><rect x="481.10" y="168.12" width="2.2" height="2.2" fill="#b0101d"/><rect x="482.50" y="168.46" width="2.2" height="2.2" fill="#b0101d"/><rect x="483.90" y="167.96" width="2.2" height="2.2" fill="#b0101d"/><rect x="484.90" y="169.34" width="2.2" height="2.2" fill="#b0101d"/><rect x="485.90" y="169.99" width="2.2" height="2.2" fill="#b0101d"/><rect x="486.90" y="171.48" width="2.2" height="2.2" fill="#b0101d"/><rect x="487.90" y="171.99" width="2.2" height="2.2" fill="#b0101d"/><rect x="489.10" y="172.80" width="2.2" height="2.2" fill="#b0101d"/><rect x="490.30" y="172.02" width="2.2" height="2.2" fill="#b0101d"/><rect x="491.50" y="170.32" width="2.2" height="2.2" fill="#b0101d"/><rect x="492.70" y="169.94" width="2.2" height="2.2" fill="#b0101d"/><rect x="493.90" y="170.58" width="2.2" height="2.2" fill="#b0101d"/><rect x="495.57" y="168.89" width="2.2" height="2.2" fill="#b0101d"/><rect x="497.23" y="170.70" width="2.2" height="2.2" fill="#b0101d"/><rect x="498.90" y="170.31" width="2.2" height="2.2" fill="#b0101d"/><rect x="500.33" y="170.29" width="2.2" height="2.2" fill="#b0101d"/><rect x="501.76" y="171.30" width="2.2" height="2.2" fill="#b0101d"/><rect x="503.19" y="170.28" width="2.2" height="2.2" fill="#b0101d"/><rect x="504.61" y="170.31" width="2.2" height="2.2" fill="#b0101d"/><rect x="506.04" y="170.87" width="2.2" height="2.2" fill="#b0101d"/><rect x="507.47" y="171.92" width="2.2" height="2.2" fill="#b0101d"/><rect x="508.90" y="170.31" width="2.2" height="2.2" fill="#b0101d"/><rect x="510.33" y="171.17" width="2.2" height="2.2" fill="#b0101d"/><rect x="511.76" y="170.96" width="2.2" height="2.2" fill="#b0101d"/><rect x="513.19" y="170.60" width="2.2" height="2.2" fill="#b0101d"/><rect x="514.61" y="169.71" width="2.2" height="2.2" fill="#b0101d"/><rect x="516.04" y="169.18" width="2.2" height="2.2" fill="#b0101d"/><rect x="517.47" y="168.05" width="2.2" height="2.2" fill="#b0101d"/><rect x="518.90" y="167.85" width="2.2" height="2.2" fill="#b0101d"/><rect x="520.33" y="167.70" width="2.2" height="2.2" fill="#b0101d"/><rect x="521.76" y="169.71" width="2.2" height="2.2" fill="#b0101d"/><rect x="523.19" y="168.90" width="2.2" height="2.2" fill="#b0101d"/><rect x="524.61" y="168.42" width="2.2" height="2.2" fill="#b0101d"/><rect x="526.04" y="168.08" width="2.2" height="2.2" fill="#b0101d"/><rect x="527.47" y="170.28" width="2.2" height="2.2" fill="#b0101d"/><rect x="528.90" y="171.06" width="2.2" height="2.2" fill="#b0101d"/><rect x="530.33" y="170.52" width="2.2" height="2.2" fill="#b0101d"/><rect x="531.76" y="169.07" width="2.2" height="2.2" fill="#b0101d"/><rect x="533.19" y="168.40" width="2.2" height="2.2" fill="#b0101d"/><rect x="534.61" y="168.23" width="2.2" height="2.2" fill="#b0101d"/><rect x="536.04" y="168.56" width="2.2" height="2.2" fill="#b0101d"/><rect x="537.47" y="167.64" width="2.2" height="2.2" fill="#b0101d"/><rect x="538.90" y="168.10" width="2.2" height="2.2" fill="#b0101d"/><rect x="540.33" y="167.86" width="2.2" height="2.2" fill="#b0101d"/><rect x="541.76" y="169.95" width="2.2" height="2.2" fill="#b0101d"/><rect x="543.19" y="170.69" width="2.2" height="2.2" fill="#b0101d"/><rect x="544.61" y="169.72" width="2.2" height="2.2" fill="#b0101d"/><rect x="546.04" y="168.61" width="2.2" height="2.2" fill="#b0101d"/><rect x="547.47" y="170.51" width="2.2" height="2.2" fill="#b0101d"/><rect x="548.90" y="169.20" width="2.2" height="2.2" fill="#b0101d"/><rect x="550.33" y="168.73" width="2.2" height="2.2" fill="#b0101d"/><rect x="551.76" y="167.40" width="2.2" height="2.2" fill="#b0101d"/><rect x="553.19" y="168.00" width="2.2" height="2.2" fill="#b0101d"/><rect x="554.61" y="168.33" width="2.2" height="2.2" fill="#b0101d"/><rect x="556.04" y="168.38" width="2.2" height="2.2" fill="#b0101d"/><rect x="557.47" y="167.37" width="2.2" height="2.2" fill="#b0101d"/><rect x="558.90" y="167.84" width="2.2" height="2.2" fill="#b0101d"/><rect x="560.33" y="166.27" width="2.2" height="2.2" fill="#b0101d"/><rect x="561.76" y="166.35" width="2.2" height="2.2" fill="#b0101d"/><rect x="563.19" y="165.65" width="2.2" height="2.2" fill="#b0101d"/><rect x="564.61" y="166.14" width="2.2" height="2.2" fill="#b0101d"/><rect x="566.04" y="165.03" width="2.2" height="2.2" fill="#b0101d"/><rect x="567.47" y="164.43" width="2.2" height="2.2" fill="#b0101d"/><rect x="568.90" y="164.97" width="2.2" height="2.2" fill="#b0101d"/><rect x="570.15" y="164.33" width="2.2" height="2.2" fill="#b0101d"/><rect x="571.40" y="164.62" width="2.2" height="2.2" fill="#b0101d"/><rect x="572.65" y="164.10" width="2.2" height="2.2" fill="#b0101d"/><rect x="573.90" y="164.12" width="2.2" height="2.2" fill="#b0101d"/><rect x="575.57" y="164.66" width="2.2" height="2.2" fill="#b0101d"/><rect x="577.23" y="165.41" width="2.2" height="2.2" fill="#b0101d"/><rect x="578.90" y="165.91" width="2.2" height="2.2" fill="#b0101d"/><rect x="579.90" y="166.94" width="2.2" height="2.2" fill="#b0101d"/><rect x="580.90" y="168.32" width="2.2" height="2.2" fill="#b0101d"/><rect x="581.90" y="170.78" width="2.2" height="2.2" fill="#b0101d"/><rect x="582.90" y="171.09" width="2.2" height="2.2" fill="#b0101d"/><rect x="583.90" y="173.35" width="2.2" height="2.2" fill="#b0101d"/><rect x="585.57" y="172.87" width="2.2" height="2.2" fill="#b0101d"/><rect x="587.23" y="170.63" width="2.2" height="2.2" fill="#b0101d"/><rect x="588.90" y="171.83" width="2.2" height="2.2" fill="#b0101d"/><rect x="590.33" y="172.15" width="2.2" height="2.2" fill="#b0101d"/><rect x="591.76" y="171.22" width="2.2" height="2.2" fill="#b0101d"/><rect x="593.19" y="170.99" width="2.2" height="2.2" fill="#b0101d"/><rect x="594.61" y="170.89" width="2.2" height="2.2" fill="#b0101d"/><rect x="596.04" y="168.65" width="2.2" height="2.2" fill="#b0101d"/><rect x="597.47" y="168.83" width="2.2" height="2.2" fill="#b0101d"/><rect x="598.90" y="168.57" width="2.2" height="2.2" fill="#b0101d"/><rect x="600.33" y="169.19" width="2.2" height="2.2" fill="#b0101d"/><rect x="601.76" y="169.03" width="2.2" height="2.2" fill="#b0101d"/><rect x="603.19" y="168.79" width="2.2" height="2.2" fill="#b0101d"/><rect x="604.61" y="167.75" width="2.2" height="2.2" fill="#b0101d"/><rect x="606.04" y="168.07" width="2.2" height="2.2" fill="#b0101d"/><rect x="607.47" y="167.30" width="2.2" height="2.2" fill="#b0101d"/><rect x="608.90" y="166.86" width="2.2" height="2.2" fill="#b0101d"/><rect x="610.33" y="165.22" width="2.2" height="2.2" fill="#b0101d"/><rect x="611.76" y="163.97" width="2.2" height="2.2" fill="#b0101d"/><rect x="613.19" y="163.72" width="2.2" height="2.2" fill="#b0101d"/><rect x="614.61" y="164.15" width="2.2" height="2.2" fill="#b0101d"/><rect x="616.04" y="163.35" width="2.2" height="2.2" fill="#b0101d"/><rect x="617.47" y="165.11" width="2.2" height="2.2" fill="#b0101d"/><rect x="618.90" y="164.64" width="2.2" height="2.2" fill="#b0101d"/><rect x="620.33" y="164.51" width="2.2" height="2.2" fill="#b0101d"/><rect x="621.77" y="164.28" width="2.2" height="2.2" fill="#b0101d"/><rect x="623.20" y="163.50" width="2.2" height="2.2" fill="#b0101d"/></g><line x1="493.5" y1="140" x2="493.5" y2="134.9" stroke="#8f1420" stroke-width="1"/><rect x="492.7" y="134.4" width="1.6" height="1.6" fill="#8f1420"/><line x1="520" y1="142.5" x2="520" y2="132.8" stroke="#8f1420" stroke-width="1"/><rect x="519.2" y="132.3" width="1.6" height="1.6" fill="#8f1420"/><line x1="532" y1="143.5" x2="532" y2="132.8" stroke="#8f1420" stroke-width="1"/><rect x="531.2" y="132.3" width="1.6" height="1.6" fill="#8f1420"/><line x1="586.5" y1="156.5" x2="586.5" y2="101.7" stroke="#8f1420" stroke-width="1"/><rect x="585.7" y="101.2" width="1.6" height="1.6" fill="#8f1420"/><line x1="604.5" y1="150" x2="604.5" y2="125.8" stroke="#8f1420" stroke-width="1"/><rect x="603.7" y="125.3" width="1.6" height="1.6" fill="#8f1420"/><g clip-path="url(#cc)" opacity="1"><path d="M450.20,83.10 L450.24,85.05 L450.29,86.93 L450.33,88.95 L450.37,90.91 L450.41,92.82 L450.46,94.76 L450.50,96.74 L450.58,98.70 L450.67,100.89 L450.75,102.91 L450.83,104.93 L450.92,107.04 L451.00,109.32 L451.50,111.36 L452.00,114.24 L452.50,117.31 L453.50,119.97 L454.23,121.57 L454.97,123.62 L455.70,126.33 L457.43,128.60 L459.17,129.95 L460.90,131.47 L461.98,131.64 L463.07,133.10 L464.15,135.04 L465.23,138.19 L466.32,139.13 L467.40,141.33 L468.05,142.48 L468.70,144.27 L469.35,146.52 L470.00,149.23 L470.65,151.45 L471.30,153.46 L471.95,154.81 L472.60,156.91 L474.00,158.10 L475.50,157.48 L475.64,155.32 L475.77,153.50 L475.91,151.29 L476.05,149.46 L476.18,147.47 L476.32,145.12 L476.45,143.13 L476.59,141.23 L476.73,139.28 L476.86,137.09 L477.00,134.31 L478.50,135.43 L480.00,139.98 L482.50,138.23 L485.00,140.04 L485.60,141.60 L486.20,144.08 L486.80,146.91 L487.40,148.06 L488.00,150.99 L488.80,148.73 L489.60,147.44 L490.40,145.33 L491.20,142.40 L492.00,142.23 L495.00,138.82 L496.67,138.77 L498.33,139.96 L500.00,143.02 L502.50,142.71 L505.00,141.32 L507.50,140.70 L510.00,141.82 L512.00,141.74 L514.00,144.32 L516.00,140.64 L518.00,143.31 L520.00,144.45 L522.00,141.28 L524.00,144.62 L526.00,144.62 L528.00,145.71 L530.00,142.99 L532.00,143.01 L534.00,143.42 L536.00,146.56 L538.00,145.37 L540.00,143.83 L542.50,143.27 L545.00,142.00 L547.50,140.19 L550.00,139.64 L552.50,143.76 L555.00,142.46 L557.50,145.73 L560.00,143.66 L561.67,141.71 L563.33,141.12 L565.00,138.37 L567.50,138.04 L570.00,139.63 L572.00,138.54 L575.00,139.00 L578.00,136.52 L579.00,138.79 L580.00,140.71 L581.00,141.89 L583.00,140.15 L583.20,141.81 L583.40,144.06 L583.60,145.99 L583.80,148.13 L584.00,150.17 L584.33,152.12 L584.67,154.09 L585.00,158.15 L588.00,155.30 L590.00,156.94 L592.50,155.71 L595.00,154.59 L597.50,155.30 L600.00,155.14 L601.50,151.36 L603.00,150.59 L606.00,147.60 L608.00,149.59 L610.00,150.27 L612.50,148.91 L615.00,148.50 L617.50,148.21 L620.00,151.15 L622.15,148.68 L624.30,146.70" fill="none" stroke="#b05a62" stroke-width="0.5" stroke-linejoin="round"/><rect x="449.35" y="82.25" width="1.7" height="1.7" fill="#8f1420"/><rect x="449.39" y="84.20" width="1.7" height="1.7" fill="#8f1420"/><rect x="449.44" y="86.08" width="1.7" height="1.7" fill="#8f1420"/><rect x="449.48" y="88.10" width="1.7" height="1.7" fill="#8f1420"/><rect x="449.52" y="90.06" width="1.7" height="1.7" fill="#8f1420"/><rect x="449.56" y="91.97" width="1.7" height="1.7" fill="#8f1420"/><rect x="449.61" y="93.91" width="1.7" height="1.7" fill="#8f1420"/><rect x="449.65" y="95.89" width="1.7" height="1.7" fill="#8f1420"/><rect x="449.73" y="97.85" width="1.7" height="1.7" fill="#8f1420"/><rect x="449.82" y="100.04" width="1.7" height="1.7" fill="#8f1420"/><rect x="449.90" y="102.06" width="1.7" height="1.7" fill="#8f1420"/><rect x="449.98" y="104.08" width="1.7" height="1.7" fill="#8f1420"/><rect x="450.07" y="106.19" width="1.7" height="1.7" fill="#8f1420"/><rect x="450.15" y="108.47" width="1.7" height="1.7" fill="#8f1420"/><rect x="450.65" y="110.51" width="1.7" height="1.7" fill="#8f1420"/><rect x="451.15" y="113.39" width="1.7" height="1.7" fill="#8f1420"/><rect x="451.65" y="116.46" width="1.7" height="1.7" fill="#8f1420"/><rect x="452.65" y="119.12" width="1.7" height="1.7" fill="#8f1420"/><rect x="453.38" y="120.72" width="1.7" height="1.7" fill="#8f1420"/><rect x="454.12" y="122.77" width="1.7" height="1.7" fill="#8f1420"/><rect x="454.85" y="125.48" width="1.7" height="1.7" fill="#8f1420"/><rect x="456.58" y="127.75" width="1.7" height="1.7" fill="#8f1420"/><rect x="458.32" y="129.10" width="1.7" height="1.7" fill="#8f1420"/><rect x="460.05" y="130.62" width="1.7" height="1.7" fill="#8f1420"/><rect x="461.13" y="130.79" width="1.7" height="1.7" fill="#8f1420"/><rect x="462.22" y="132.25" width="1.7" height="1.7" fill="#8f1420"/><rect x="463.30" y="134.19" width="1.7" height="1.7" fill="#8f1420"/><rect x="464.38" y="137.34" width="1.7" height="1.7" fill="#8f1420"/><rect x="465.47" y="138.28" width="1.7" height="1.7" fill="#8f1420"/><rect x="466.55" y="140.48" width="1.7" height="1.7" fill="#8f1420"/><rect x="467.20" y="141.63" width="1.7" height="1.7" fill="#8f1420"/><rect x="467.85" y="143.42" width="1.7" height="1.7" fill="#8f1420"/><rect x="468.50" y="145.67" width="1.7" height="1.7" fill="#8f1420"/><rect x="469.15" y="148.38" width="1.7" height="1.7" fill="#8f1420"/><rect x="469.80" y="150.60" width="1.7" height="1.7" fill="#8f1420"/><rect x="470.45" y="152.61" width="1.7" height="1.7" fill="#8f1420"/><rect x="471.10" y="153.96" width="1.7" height="1.7" fill="#8f1420"/><rect x="471.75" y="156.06" width="1.7" height="1.7" fill="#8f1420"/><rect x="473.15" y="157.25" width="1.7" height="1.7" fill="#8f1420"/><rect x="474.65" y="156.63" width="1.7" height="1.7" fill="#8f1420"/><rect x="474.79" y="154.47" width="1.7" height="1.7" fill="#8f1420"/><rect x="474.92" y="152.65" width="1.7" height="1.7" fill="#8f1420"/><rect x="475.06" y="150.44" width="1.7" height="1.7" fill="#8f1420"/><rect x="475.20" y="148.61" width="1.7" height="1.7" fill="#8f1420"/><rect x="475.33" y="146.62" width="1.7" height="1.7" fill="#8f1420"/><rect x="475.47" y="144.27" width="1.7" height="1.7" fill="#8f1420"/><rect x="475.60" y="142.28" width="1.7" height="1.7" fill="#8f1420"/><rect x="475.74" y="140.38" width="1.7" height="1.7" fill="#8f1420"/><rect x="475.88" y="138.43" width="1.7" height="1.7" fill="#8f1420"/><rect x="476.01" y="136.24" width="1.7" height="1.7" fill="#8f1420"/><rect x="476.15" y="133.46" width="1.7" height="1.7" fill="#8f1420"/><rect x="477.65" y="134.58" width="1.7" height="1.7" fill="#8f1420"/><rect x="479.15" y="139.13" width="1.7" height="1.7" fill="#8f1420"/><rect x="481.65" y="137.38" width="1.7" height="1.7" fill="#8f1420"/><rect x="484.15" y="139.19" width="1.7" height="1.7" fill="#8f1420"/><rect x="484.75" y="140.75" width="1.7" height="1.7" fill="#8f1420"/><rect x="485.35" y="143.23" width="1.7" height="1.7" fill="#8f1420"/><rect x="485.95" y="146.06" width="1.7" height="1.7" fill="#8f1420"/><rect x="486.55" y="147.21" width="1.7" height="1.7" fill="#8f1420"/><rect x="487.15" y="150.14" width="1.7" height="1.7" fill="#8f1420"/><rect x="487.95" y="147.88" width="1.7" height="1.7" fill="#8f1420"/><rect x="488.75" y="146.59" width="1.7" height="1.7" fill="#8f1420"/><rect x="489.55" y="144.48" width="1.7" height="1.7" fill="#8f1420"/><rect x="490.35" y="141.55" width="1.7" height="1.7" fill="#8f1420"/><rect x="491.15" y="141.38" width="1.7" height="1.7" fill="#8f1420"/><rect x="494.15" y="137.97" width="1.7" height="1.7" fill="#8f1420"/><rect x="495.82" y="137.92" width="1.7" height="1.7" fill="#8f1420"/><rect x="497.48" y="139.11" width="1.7" height="1.7" fill="#8f1420"/><rect x="499.15" y="142.17" width="1.7" height="1.7" fill="#8f1420"/><rect x="501.65" y="141.86" width="1.7" height="1.7" fill="#8f1420"/><rect x="504.15" y="140.47" width="1.7" height="1.7" fill="#8f1420"/><rect x="506.65" y="139.85" width="1.7" height="1.7" fill="#8f1420"/><rect x="509.15" y="140.97" width="1.7" height="1.7" fill="#8f1420"/><rect x="511.15" y="140.89" width="1.7" height="1.7" fill="#8f1420"/><rect x="513.15" y="143.47" width="1.7" height="1.7" fill="#8f1420"/><rect x="515.15" y="139.79" width="1.7" height="1.7" fill="#8f1420"/><rect x="517.15" y="142.46" width="1.7" height="1.7" fill="#8f1420"/><rect x="519.15" y="143.60" width="1.7" height="1.7" fill="#8f1420"/><rect x="521.15" y="140.43" width="1.7" height="1.7" fill="#8f1420"/><rect x="523.15" y="143.77" width="1.7" height="1.7" fill="#8f1420"/><rect x="525.15" y="143.77" width="1.7" height="1.7" fill="#8f1420"/><rect x="527.15" y="144.86" width="1.7" height="1.7" fill="#8f1420"/><rect x="529.15" y="142.14" width="1.7" height="1.7" fill="#8f1420"/><rect x="531.15" y="142.16" width="1.7" height="1.7" fill="#8f1420"/><rect x="533.15" y="142.57" width="1.7" height="1.7" fill="#8f1420"/><rect x="535.15" y="145.71" width="1.7" height="1.7" fill="#8f1420"/><rect x="537.15" y="144.52" width="1.7" height="1.7" fill="#8f1420"/><rect x="539.15" y="142.98" width="1.7" height="1.7" fill="#8f1420"/><rect x="541.65" y="142.42" width="1.7" height="1.7" fill="#8f1420"/><rect x="544.15" y="141.15" width="1.7" height="1.7" fill="#8f1420"/><rect x="546.65" y="139.34" width="1.7" height="1.7" fill="#8f1420"/><rect x="549.15" y="138.79" width="1.7" height="1.7" fill="#8f1420"/><rect x="551.65" y="142.91" width="1.7" height="1.7" fill="#8f1420"/><rect x="554.15" y="141.61" width="1.7" height="1.7" fill="#8f1420"/><rect x="556.65" y="144.88" width="1.7" height="1.7" fill="#8f1420"/><rect x="559.15" y="142.81" width="1.7" height="1.7" fill="#8f1420"/><rect x="560.82" y="140.86" width="1.7" height="1.7" fill="#8f1420"/><rect x="562.48" y="140.27" width="1.7" height="1.7" fill="#8f1420"/><rect x="564.15" y="137.52" width="1.7" height="1.7" fill="#8f1420"/><rect x="566.65" y="137.19" width="1.7" height="1.7" fill="#8f1420"/><rect x="569.15" y="138.78" width="1.7" height="1.7" fill="#8f1420"/><rect x="571.15" y="137.69" width="1.7" height="1.7" fill="#8f1420"/><rect x="574.15" y="138.15" width="1.7" height="1.7" fill="#8f1420"/><rect x="577.15" y="135.67" width="1.7" height="1.7" fill="#8f1420"/><rect x="578.15" y="137.94" width="1.7" height="1.7" fill="#8f1420"/><rect x="579.15" y="139.86" width="1.7" height="1.7" fill="#8f1420"/><rect x="580.15" y="141.04" width="1.7" height="1.7" fill="#8f1420"/><rect x="582.15" y="139.30" width="1.7" height="1.7" fill="#8f1420"/><rect x="582.35" y="140.96" width="1.7" height="1.7" fill="#8f1420"/><rect x="582.55" y="143.21" width="1.7" height="1.7" fill="#8f1420"/><rect x="582.75" y="145.14" width="1.7" height="1.7" fill="#8f1420"/><rect x="582.95" y="147.28" width="1.7" height="1.7" fill="#8f1420"/><rect x="583.15" y="149.32" width="1.7" height="1.7" fill="#8f1420"/><rect x="583.48" y="151.27" width="1.7" height="1.7" fill="#8f1420"/><rect x="583.82" y="153.24" width="1.7" height="1.7" fill="#8f1420"/><rect x="584.15" y="157.30" width="1.7" height="1.7" fill="#8f1420"/><rect x="587.15" y="154.45" width="1.7" height="1.7" fill="#8f1420"/><rect x="589.15" y="156.09" width="1.7" height="1.7" fill="#8f1420"/><rect x="591.65" y="154.86" width="1.7" height="1.7" fill="#8f1420"/><rect x="594.15" y="153.74" width="1.7" height="1.7" fill="#8f1420"/><rect x="596.65" y="154.45" width="1.7" height="1.7" fill="#8f1420"/><rect x="599.15" y="154.29" width="1.7" height="1.7" fill="#8f1420"/><rect x="600.65" y="150.51" width="1.7" height="1.7" fill="#8f1420"/><rect x="602.15" y="149.74" width="1.7" height="1.7" fill="#8f1420"/><rect x="605.15" y="146.75" width="1.7" height="1.7" fill="#8f1420"/><rect x="607.15" y="148.74" width="1.7" height="1.7" fill="#8f1420"/><rect x="609.15" y="149.42" width="1.7" height="1.7" fill="#8f1420"/><rect x="611.65" y="148.06" width="1.7" height="1.7" fill="#8f1420"/><rect x="614.15" y="147.65" width="1.7" height="1.7" fill="#8f1420"/><rect x="616.65" y="147.36" width="1.7" height="1.7" fill="#8f1420"/><rect x="619.15" y="150.30" width="1.7" height="1.7" fill="#8f1420"/><rect x="621.30" y="147.83" width="1.7" height="1.7" fill="#8f1420"/><rect x="623.45" y="145.85" width="1.7" height="1.7" fill="#8f1420"/></g><line x1="449.8" y1="83.0" x2="449.8" y2="230.4" stroke="#b3121f" stroke-width="0.9"/><rect x="433.7" y="83.0" width="190.59999999999997" height="147.4" fill="none" stroke="#555" stroke-width="1"/><line x1="433.7" y1="83.0" x2="624.3" y2="83.0" stroke="#888" stroke-width="1.4"/><line x1="431.7" y1="230.40" x2="433.7" y2="230.40" stroke="#444" stroke-width="0.7"/><line x1="431.7" y1="202.40" x2="433.7" y2="202.40" stroke="#444" stroke-width="0.7"/><line x1="431.7" y1="165.40" x2="433.7" y2="165.40" stroke="#444" stroke-width="0.7"/><line x1="431.7" y1="151.81" x2="433.7" y2="151.81" stroke="#444" stroke-width="0.7"/><line x1="431.7" y1="137.40" x2="433.7" y2="137.40" stroke="#444" stroke-width="0.7"/><line x1="431.7" y1="109.40" x2="433.7" y2="109.40" stroke="#444" stroke-width="0.7"/><line x1="624.3" y1="230.60" x2="626.3" y2="230.60" stroke="#444" stroke-width="0.7"/><line x1="624.3" y1="203.25" x2="626.3" y2="203.25" stroke="#444" stroke-width="0.7"/><line x1="624.3" y1="175.90" x2="626.3" y2="175.90" stroke="#444" stroke-width="0.7"/><line x1="624.3" y1="148.55" x2="626.3" y2="148.55" stroke="#444" stroke-width="0.7"/><line x1="624.3" y1="121.20" x2="626.3" y2="121.20" stroke="#444" stroke-width="0.7"/><line x1="624.3" y1="93.85" x2="626.3" y2="93.85" stroke="#444" stroke-width="0.7"/><line x1="449.60" y1="230.4" x2="449.60" y2="232.4" stroke="#444" stroke-width="0.7"/><line x1="468.75" y1="230.4" x2="468.75" y2="232.4" stroke="#444" stroke-width="0.7"/><line x1="487.90" y1="230.4" x2="487.90" y2="232.4" stroke="#444" stroke-width="0.7"/><line x1="507.05" y1="230.4" x2="507.05" y2="232.4" stroke="#444" stroke-width="0.7"/><line x1="526.20" y1="230.4" x2="526.20" y2="232.4" stroke="#444" stroke-width="0.7"/><line x1="545.35" y1="230.4" x2="545.35" y2="232.4" stroke="#444" stroke-width="0.7"/><line x1="564.50" y1="230.4" x2="564.50" y2="232.4" stroke="#444" stroke-width="0.7"/><line x1="583.65" y1="230.4" x2="583.65" y2="232.4" stroke="#444" stroke-width="0.7"/><line x1="602.80" y1="230.4" x2="602.80" y2="232.4" stroke="#444" stroke-width="0.7"/><line x1="621.95" y1="230.4" x2="621.95" y2="232.4" stroke="#444" stroke-width="0.7"/></svg><div class="t" style="left:426.07px;top:228.74px;font-size:5.028px;color:#222;transform:scaleX(0.950);">10</div><div class="t" style="left:426.07px;top:200.75px;font-size:5.028px;color:#222;transform:scaleX(0.950);">20</div><div class="t" style="left:426.07px;top:163.74px;font-size:5.028px;color:#222;transform:scaleX(0.950);">50</div><div class="t" style="left:426.07px;top:150.15px;font-size:5.028px;color:#222;transform:scaleX(0.950);">70</div><div class="t" style="left:423.42px;top:135.74px;font-size:5.028px;color:#222;transform:scaleX(0.950);">100</div><div class="t" style="left:423.42px;top:107.75px;font-size:5.028px;color:#222;transform:scaleX(0.950);">200</div><div class="t" style="left:627.36px;top:228.94px;font-size:5.028px;color:#222;transform:scaleX(0.950);">0</div><div class="t" style="left:627.31px;top:201.59px;font-size:5.028px;color:#222;transform:scaleX(0.950);">5</div><div class="t" style="left:627.17px;top:174.24px;font-size:5.028px;color:#222;transform:scaleX(0.950);">10</div><div class="t" style="left:627.17px;top:146.89px;font-size:5.028px;color:#222;transform:scaleX(0.950);">15</div><div class="t" style="left:627.26px;top:119.54px;font-size:5.028px;color:#222;transform:scaleX(0.950);">20</div><div class="t" style="left:627.26px;top:92.19px;font-size:5.028px;color:#222;transform:scaleX(0.950);">25</div><div class="t" style="left:448.34px;top:233.78px;font-size:4.749px;color:#222;transform:scaleX(0.950);">0</div><div class="t" style="left:466.24px;top:233.78px;font-size:4.749px;color:#222;transform:scaleX(0.950);">25</div><div class="t" style="left:485.39px;top:233.78px;font-size:4.749px;color:#222;transform:scaleX(0.950);">50</div><div class="t" style="left:504.54px;top:233.78px;font-size:4.749px;color:#222;transform:scaleX(0.950);">75</div><div class="t" style="left:522.34px;top:233.78px;font-size:4.749px;color:#222;transform:scaleX(0.950);">100</div><div class="t" style="left:541.51px;top:233.78px;font-size:4.749px;color:#222;transform:scaleX(0.950);">125</div><div class="t" style="left:560.64px;top:233.78px;font-size:4.749px;color:#222;transform:scaleX(0.950);">150</div><div class="t" style="left:579.81px;top:233.78px;font-size:4.749px;color:#222;transform:scaleX(0.950);">175</div><div class="t" style="left:599.01px;top:233.78px;font-size:4.749px;color:#222;transform:scaleX(0.950);">200</div><div class="t" style="left:618.18px;top:233.78px;font-size:4.749px;color:#222;transform:scaleX(0.950);">225</div><div class="t" style="left:514.55px;top:241.04px;font-size:6.564px;color:#111;font-weight:bold;transform:scaleX(0.921);">Time / ms</div><div class="t" style="left:419px;top:150px;font-size:6.3px;font-weight:bold;color:#111;transform:translate(-50%,-50%) rotate(-90deg) scaleX(0.92);transform-origin:50% 50%">Particle Size / µm</div><div class="t" style="left:636.4px;top:162.7px;font-size:6.3px;font-weight:bold;color:#111;transform:translate(-50%,-50%) rotate(-90deg) scaleX(0.92);transform-origin:50% 50%">Optical Concentration / %</div><svg style="left:0;top:0" width="653" height="100"><rect x="412" y="61.5" width="17" height="16" fill="none" stroke="#e6e6e6" stroke-width="0.6" stroke-dasharray="0.8,0.8"/><rect x="433" y="61.5" width="20" height="16" fill="none" stroke="#e6e6e6" stroke-width="0.6" stroke-dasharray="0.8,0.8"/><rect x="454" y="61.5" width="9" height="16" fill="none" stroke="#e6e6e6" stroke-width="0.6" stroke-dasharray="0.8,0.8"/><rect x="466" y="61.5" width="19" height="16" fill="none" stroke="#e6e6e6" stroke-width="0.6" stroke-dasharray="0.8,0.8"/><rect x="487" y="61.5" width="20" height="16" fill="none" stroke="#e6e6e6" stroke-width="0.6" stroke-dasharray="0.8,0.8"/><rect x="509" y="61.5" width="18" height="16" fill="none" stroke="#e6e6e6" stroke-width="0.6" stroke-dasharray="0.8,0.8"/><rect x="528" y="61.5" width="11" height="16" fill="none" stroke="#e6e6e6" stroke-width="0.6" stroke-dasharray="0.8,0.8"/><rect x="541" y="61.5" width="19" height="16" fill="none" stroke="#e6e6e6" stroke-width="0.6" stroke-dasharray="0.8,0.8"/><rect x="561" y="61.5" width="10" height="16" fill="none" stroke="#e6e6e6" stroke-width="0.6" stroke-dasharray="0.8,0.8"/><rect x="577" y="61.5" width="20" height="16" fill="none" stroke="#e6e6e6" stroke-width="0.6" stroke-dasharray="0.8,0.8"/><rect x="598" y="61.5" width="20" height="16" fill="none" stroke="#e6e6e6" stroke-width="0.6" stroke-dasharray="0.8,0.8"/><path d="M415.5,64 h9 l1.5,1.5 v9.5 h-10.5z" fill="none" stroke="#222" stroke-width="1.1"/><rect x="417.8" y="64" width="5.5" height="3" fill="none" stroke="#222" stroke-width="0.8"/><rect x="417.5" y="70" width="6.5" height="5" fill="none" stroke="#222" stroke-width="0.8"/><rect x="422" y="64.2" width="1.6" height="1.6" fill="#a2121f"/><rect x="439.5" y="63.5" width="7.5" height="3.5" fill="none" stroke="#222" stroke-width="0.9"/><rect x="437" y="67" width="12.5" height="5.5" rx="1" fill="none" stroke="#222" stroke-width="1.1"/><rect x="439.5" y="70.5" width="7.5" height="4.5" fill="#fff" stroke="#222" stroke-width="0.9"/><path d="M456.5,68 h4 l-2,2.5z" fill="#222"/><path d="M469.5,64 h6 v2 M469.5,64 v10 h2" fill="none" stroke="#222" stroke-width="1"/><path d="M472,66.5 h6.5 l2.5,2.5 v7 h-9z" fill="#fff" stroke="#222" stroke-width="1"/><circle cx="497.2" cy="69.3" r="6.3" fill="none" stroke="#222" stroke-width="1.2"/><path d="M494.7,66.8 l5,5 M499.7,66.8 l-5,5" stroke="#a2121f" stroke-width="1.5"/><polygon points="521.38,68.98 521.19,69.92 519.59,70.15 519.21,70.72 519.61,72.29 518.81,72.82 517.52,71.85 516.84,71.98 516.02,73.38 515.08,73.19 514.85,71.59 514.28,71.21 512.71,71.61 512.18,70.81 513.15,69.52 513.02,68.84 511.62,68.02 511.81,67.08 513.41,66.85 513.79,66.28 513.39,64.71 514.19,64.18 515.48,65.15 516.16,65.02 516.98,63.62 517.92,63.81 518.15,65.41 518.72,65.79 520.29,65.39 520.82,66.19 519.85,67.48 519.98,68.16" fill="none" stroke="#222" stroke-width="1.3" stroke-linejoin="round"/><circle cx="516.5" cy="68.5" r="1.5" fill="none" stroke="#222" stroke-width="1.3"/><path d="M519.5,74.5 l3.5,-3.5" stroke="#a2121f" stroke-width="1.6"/><path d="M531.8,68 h4 l-2,2.5z" fill="#222"/><circle cx="551" cy="66.8" r="3.6" fill="none" stroke="#222" stroke-width="1.1"/><path d="M548.5,69.5 l-3.5,3.8" stroke="#777" stroke-width="1.6"/><rect x="554.2" y="71.8" width="2" height="2" fill="#a2121f"/><path d="M564.6,68 h4 l-2,2.5z" fill="#222"/><circle cx="587" cy="69" r="5" fill="none" stroke="#222" stroke-width="1.1"/><path d="M587,62.5 v3 M587,72.5 v3 M580.5,69 h3 M590.5,69 h3" stroke="#222" stroke-width="1.1"/><circle cx="587" cy="69" r="0.9" fill="#a2121f"/><rect x="601" y="63.5" width="10" height="11" fill="none" stroke="#222" stroke-width="1"/><path d="M603,66.5 h6 M603,69 h6 M603,71.5 h4" stroke="#222" stroke-width="0.8"/><rect x="608.5" y="71.5" width="6.5" height="3.8" rx="1.9" fill="#a2121f"/><path d="M634,74 h4 l-2,2.5z" fill="#222"/></svg><div class="ab" style="left:40px;top:272px;width:318px;height:21.5px;background:#a2121f;"></div><div class="ab" style="left:40px;top:272px;width:1.5px;height:207px;background:#a2121f;"></div><div class="ab" style="left:356.5px;top:272px;width:1.5px;height:207px;background:#a2121f;"></div><div class="t" style="left:46.63px;top:280.46px;font-size:6.425px;color:#fff;font-weight:bold;transform:scaleX(0.937);">MEASUREMENT SEGMENTS - 2022-09-19 11:47:22.1019 | Nasal-Spray | SPRAYER/SMACTOR+SMACTOR R5</div><div class="ab" style="left:337px;top:272px;width:21px;height:21.5px;background:#a2121f"></div><svg style="left:0;top:0" width="1" height="1"><path d="M347,281.2 l3.6,3.6 M350.6,281.2 l-3.6,3.6" stroke="#fff" stroke-width="1.3"/></svg><svg style="left:0;top:0" width="653" height="479"><rect x="48" y="299.5" width="18" height="16" fill="none" stroke="#e8e8e8" stroke-width="0.6" stroke-dasharray="0.8,0.8"/><rect x="71" y="299.5" width="21" height="16" fill="none" stroke="#e8e8e8" stroke-width="0.6" stroke-dasharray="0.8,0.8"/><rect x="93" y="299.5" width="8" height="16" fill="none" stroke="#e8e8e8" stroke-width="0.6" stroke-dasharray="0.8,0.8"/><rect x="104" y="299.5" width="20" height="16" fill="none" stroke="#e8e8e8" stroke-width="0.6" stroke-dasharray="0.8,0.8"/><rect x="126" y="299.5" width="8" height="16" fill="none" stroke="#e8e8e8" stroke-width="0.6" stroke-dasharray="0.8,0.8"/><rect x="138" y="299.5" width="18" height="16" fill="none" stroke="#e8e8e8" stroke-width="0.6" stroke-dasharray="0.8,0.8"/><rect x="158" y="299.5" width="8" height="16" fill="none" stroke="#e8e8e8" stroke-width="0.6" stroke-dasharray="0.8,0.8"/><rect x="172" y="299.5" width="20" height="16" fill="none" stroke="#e8e8e8" stroke-width="0.6" stroke-dasharray="0.8,0.8"/><rect x="196" y="299.5" width="20" height="16" fill="none" stroke="#e8e8e8" stroke-width="0.6" stroke-dasharray="0.8,0.8"/><rect x="219" y="299.5" width="20" height="16" fill="none" stroke="#e8e8e8" stroke-width="0.6" stroke-dasharray="0.8,0.8"/><rect x="240" y="299.5" width="20" height="16" fill="none" stroke="#e8e8e8" stroke-width="0.6" stroke-dasharray="0.8,0.8"/><rect x="264" y="299.5" width="18" height="16" fill="none" stroke="#e8e8e8" stroke-width="0.6" stroke-dasharray="0.8,0.8"/><rect x="285" y="299.5" width="20" height="16" fill="none" stroke="#e8e8e8" stroke-width="0.6" stroke-dasharray="0.8,0.8"/><line x1="69.6" y1="302" x2="69.6" y2="314" stroke="#ddd" stroke-width="0.7"/><line x1="169.9" y1="302" x2="169.9" y2="314" stroke="#e4e4e4" stroke-width="0.7" stroke-dasharray="0.8,0.8"/><path d="M51,302.5 h7 v10 M51,302.5 v10.5 l4,1.5 v-10.5 l-4,-1.5" fill="none" stroke="#222" stroke-width="1"/><path d="M59.5,309.5 l3,-2 v4z" fill="#a2121f"/><rect x="74" y="302.5" width="10.5" height="6.5" fill="none" stroke="#222" stroke-width="1"/><rect x="77.5" y="305.5" width="11" height="6.5" fill="#fff" stroke="#222" stroke-width="1.1"/><path d="M79,310.5 l2.5,-2 l2,1 l3.5,-2.5" stroke="#a2121f" fill="none" stroke-width="0.9"/><path d="M95,306.5 h3.6 l-1.8,2.3z" fill="#222"/><rect x="107" y="302.5" width="10" height="6.5" fill="none" stroke="#c8c8c8" stroke-width="0.9"/><rect x="110.5" y="305.5" width="10.5" height="6.5" fill="#fff" stroke="#c8c8c8" stroke-width="0.9"/><circle cx="117" cy="311.5" r="1.8" fill="#fff" stroke="#e0a0a6" stroke-width="0.7"/><path d="M128,306.5 h3.4 l-1.7,2.2z" fill="#c8c8c8"/><path d="M141.5,303 v10 M152,303 v10 M142,305 h9.5 M142,308 h9.5 M142,311 h9.5" stroke="#c8c8c8" stroke-width="0.9"/><path d="M160.2,306.5 h3.4 l-1.7,2.2z" fill="#c8c8c8"/><rect x="175.5" y="302.5" width="10.5" height="6.5" fill="none" stroke="#222" stroke-width="1"/><rect x="178.5" y="305.5" width="10" height="7" fill="#fff" stroke="#222" stroke-width="1.1"/><path d="M179.5,308 l2,-1.2 l2,1 l3,-1.5" stroke="#a2121f" fill="none" stroke-width="0.8"/><path d="M184.5,309.5 l3,3 M187.5,309.5 l-3,3" stroke="#a2121f" stroke-width="0.9"/><rect x="199.5" y="302.5" width="10.5" height="9" fill="none" stroke="#222" stroke-width="1"/><path d="M201.5,305.5 h6.5 M201.5,308 h6.5" stroke="#222" stroke-width="0.9"/><path d="M207.5,312.5 a2.8,2.8 0 0 1 5,-1.5 M212.8,313 a2.8,2.8 0 0 1 -5,1" fill="none" stroke="#a2121f" stroke-width="1.2"/><rect x="222.5" y="302.5" width="10" height="9.5" fill="none" stroke="#a2121f" stroke-width="1.2" stroke-dasharray="2,1.2"/><circle cx="233" cy="312" r="2.3" fill="#fff" stroke="#a2121f" stroke-width="0.8"/><path d="M232,311.5 l1,1 l1,-1" stroke="#a2121f" fill="none" stroke-width="0.7"/><rect x="243" y="302.5" width="10.5" height="10" fill="none" stroke="#222" stroke-width="1.1"/><path d="M246,306 h1.2 M249.5,306 h1.2 M246,309.5 h1.2 M249.5,309.5 h1.2" stroke="#222" stroke-width="1"/><circle cx="254.5" cy="312.3" r="2.4" fill="#fff" stroke="#a2121f" stroke-width="0.8"/><circle cx="254.5" cy="312.3" r="0.9" fill="#a2121f"/><path d="M267.5,302.5 h10 l-4,5 v5.5 l-2,-1.2 v-4.3z" fill="none" stroke="#222" stroke-width="1.1"/><path d="M276,310.5 l2.5,2.5 M278.5,310.5 l-2.5,2.5" stroke="#a2121f" stroke-width="1"/><polygon points="299.38,307.78 299.19,308.72 297.59,308.95 297.21,309.52 297.61,311.09 296.81,311.62 295.52,310.65 294.84,310.78 294.02,312.18 293.08,311.99 292.85,310.39 292.28,310.01 290.71,310.41 290.18,309.61 291.15,308.32 291.02,307.64 289.62,306.82 289.81,305.88 291.41,305.65 291.79,305.08 291.39,303.51 292.19,302.98 293.48,303.95 294.16,303.82 294.98,302.42 295.92,302.61 296.15,304.21 296.72,304.59 298.29,304.19 298.82,304.99 297.85,306.28 297.98,306.96" fill="none" stroke="#222" stroke-width="1.3" stroke-linejoin="round"/><circle cx="294.5" cy="307.3" r="1.5" fill="none" stroke="#222" stroke-width="1.3"/><path d="M297.5,313.5 l4,-4" stroke="#a2121f" stroke-width="1.6"/><rect x="47" y="332.6" width="298" height="1.5" fill="#b4b4b4"/><rect x="47" y="348.10" width="298" height="0.8" fill="#d6d6d6"/><rect x="47" y="362.05" width="298" height="0.8" fill="#d6d6d6"/><rect x="47" y="376.00" width="298" height="0.8" fill="#d6d6d6"/><rect x="47" y="389.95" width="298" height="0.8" fill="#d6d6d6"/><rect x="47" y="403.90" width="298" height="0.8" fill="#d6d6d6"/><rect x="47" y="417.85" width="298" height="0.8" fill="#d6d6d6"/><rect x="47" y="431.80" width="298" height="0.8" fill="#d6d6d6"/><rect x="47" y="445.75" width="298" height="0.8" fill="#d6d6d6"/><rect x="47" y="459.70" width="298" height="0.8" fill="#d6d6d6"/><rect x="47" y="473.65" width="298" height="0.8" fill="#d6d6d6"/><rect x="47" y="376.80" width="298" height="13.15" fill="#e2e2e2"/><path d="M65.3,323.6 h4 l-1.5,2 v2.8 h-1 v-2.8z" fill="#b0b0b0"/><path d="M103.8,323.6 h4 l-1.5,2 v2.8 h-1 v-2.8z" fill="#b0b0b0"/><path d="M133.3,323.6 h4 l-1.5,2 v2.8 h-1 v-2.8z" fill="#b0b0b0"/><path d="M161.3,323.6 h4 l-1.5,2 v2.8 h-1 v-2.8z" fill="#b0b0b0"/><path d="M204.7,323.6 h4 l-1.5,2 v2.8 h-1 v-2.8z" fill="#b0b0b0"/><path d="M256.6,323.6 h4 l-1.5,2 v2.8 h-1 v-2.8z" fill="#b0b0b0"/><path d="M290.3,323.6 h4 l-1.5,2 v2.8 h-1 v-2.8z" fill="#b0b0b0"/><path d="M325.5,323.6 h4 l-1.5,2 v2.8 h-1 v-2.8z" fill="#b0b0b0"/><path d="M73.5,324 h4 M73.5,326 h3 M73.5,328 h5" stroke="#999" stroke-width="0.6"/><path d="M302.6,383.85 l1.8,1.9 l3.4,-4" fill="none" stroke="#333" stroke-width="1.1"/><path d="M302.6,397.80 l1.8,1.9 l3.4,-4" fill="none" stroke="#333" stroke-width="1.1"/><path d="M302.6,411.75 l1.8,1.9 l3.4,-4" fill="none" stroke="#333" stroke-width="1.1"/><path d="M302.6,425.70 l1.8,1.9 l3.4,-4" fill="none" stroke="#333" stroke-width="1.1"/><path d="M302.6,439.65 l1.8,1.9 l3.4,-4" fill="none" stroke="#333" stroke-width="1.1"/><path d="M302.6,453.60 l1.8,1.9 l3.4,-4" fill="none" stroke="#333" stroke-width="1.1"/><path d="M302.6,467.55 l1.8,1.9 l3.4,-4" fill="none" stroke="#333" stroke-width="1.1"/><path d="M346.8,322 l2.2,-2 l2.2,2" fill="none" stroke="#c0c0c0" stroke-width="0.7"/><path d="M346.8,469.8 l2.2,2 l2.2,-2" fill="none" stroke="#c0c0c0" stroke-width="0.7"/><path d="M348,356 h2 M348,357.5 h2 M348,359 h2" stroke="#aaa" stroke-width="0.5"/><path d="M52,476 l-1.5,1.8 l1.5,1.8" fill="none" stroke="#bbb" stroke-width="0.7"/><path d="M340.5,475.5 l1.5,1.8 l-1.5,1.8" fill="none" stroke="#bbb" stroke-width="0.7"/><rect x="54.5" y="477" width="183" height="3" fill="#c4c4c4"/></svg><div class="t" style="left:47.45px;top:323.36px;font-size:6.425px;color:#2e2e2e;transform:scaleX(0.993);">Index</div><div class="t" style="left:82.66px;top:323.36px;font-size:6.425px;color:#2e2e2e;transform:scaleX(0.973);">Start...</div><div class="t" style="left:112.46px;top:323.36px;font-size:6.425px;color:#2e2e2e;transform:scaleX(0.953);">Stop...</div><div class="t" style="left:141.65px;top:323.36px;font-size:6.425px;color:#2e2e2e;transform:scaleX(1.009);">Star...</div><div class="t" style="left:170.26px;top:323.36px;font-size:6.425px;color:#2e2e2e;transform:scaleX(0.970);">Stop - Da...</div><div class="t" style="left:213.46px;top:323.36px;font-size:6.425px;color:#2e2e2e;transform:scaleX(0.877);">Phase</div><div class="t" style="left:265.26px;top:323.36px;font-size:6.425px;color:#2e2e2e;transform:scaleX(0.952);">Status</div><div class="t" style="left:299.16px;top:323.36px;font-size:6.425px;color:#2e2e2e;transform:scaleX(0.977);">In use</div><div class="t" style="left:334.49px;top:323.36px;font-size:6.425px;color:#2e2e2e;transform:scaleX(1.039);">Cop</div><div class="ab" style="left:345px;top:318px;width:11px;height:12px;background:#fff"></div><svg style="left:0;top:0" width="1" height="1"><path d="M346.8,322 l2.2,-2 l2.2,2" fill="none" stroke="#c0c0c0" stroke-width="0.7"/></svg><div class="t" style="left:49.80px;top:339.11px;font-size:6.844px;color:#444;-webkit-text-stroke:0;transform:scaleX(0.820);">55</div><div class="t" style="left:84.80px;top:339.11px;font-size:6.844px;color:#444;-webkit-text-stroke:0;transform:scaleX(0.820);">54</div><div class="t" style="left:114.20px;top:339.11px;font-size:6.844px;color:#444;-webkit-text-stroke:0;transform:scaleX(0.820);">55</div><div class="t" style="left:143.29px;top:339.11px;font-size:6.844px;color:#444;-webkit-text-stroke:0;transform:scaleX(0.820);">33</div><div class="t" style="left:171.79px;top:339.11px;font-size:6.844px;color:#444;-webkit-text-stroke:0;transform:scaleX(0.820);">34</div><div class="t" style="left:215.02px;top:339.11px;font-size:6.844px;color:#444;-webkit-text-stroke:0;transform:scaleX(0.866);">Data phase</div><div class="t" style="left:335.75px;top:339.11px;font-size:6.844px;color:#444;-webkit-text-stroke:0;transform:scaleX(0.820);">26.1</div><div class="t" style="left:49.80px;top:353.06px;font-size:6.844px;color:#444;-webkit-text-stroke:0;transform:scaleX(0.820);">56</div><div class="t" style="left:84.80px;top:353.06px;font-size:6.844px;color:#444;-webkit-text-stroke:0;transform:scaleX(0.820);">55</div><div class="t" style="left:114.20px;top:353.06px;font-size:6.844px;color:#444;-webkit-text-stroke:0;transform:scaleX(0.820);">56</div><div class="t" style="left:143.29px;top:353.06px;font-size:6.844px;color:#444;-webkit-text-stroke:0;transform:scaleX(0.820);">34</div><div class="t" style="left:171.79px;top:353.06px;font-size:6.844px;color:#444;-webkit-text-stroke:0;transform:scaleX(0.820);">35</div><div class="t" style="left:215.02px;top:353.06px;font-size:6.844px;color:#444;-webkit-text-stroke:0;transform:scaleX(0.866);">Data phase</div><div class="t" style="left:335.75px;top:353.06px;font-size:6.844px;color:#444;-webkit-text-stroke:0;transform:scaleX(0.820);">26.4</div><div class="t" style="left:49.80px;top:367.01px;font-size:6.844px;color:#444;-webkit-text-stroke:0;transform:scaleX(0.820);">57</div><div class="t" style="left:84.80px;top:367.01px;font-size:6.844px;color:#444;-webkit-text-stroke:0;transform:scaleX(0.820);">56</div><div class="t" style="left:114.20px;top:367.01px;font-size:6.844px;color:#444;-webkit-text-stroke:0;transform:scaleX(0.820);">57</div><div class="t" style="left:143.29px;top:367.01px;font-size:6.844px;color:#444;-webkit-text-stroke:0;transform:scaleX(0.820);">35</div><div class="t" style="left:171.79px;top:367.01px;font-size:6.844px;color:#444;-webkit-text-stroke:0;transform:scaleX(0.820);">36</div><div class="t" style="left:215.02px;top:367.01px;font-size:6.844px;color:#444;-webkit-text-stroke:0;transform:scaleX(0.866);">Data phase</div><div class="t" style="left:335.75px;top:367.01px;font-size:6.844px;color:#444;-webkit-text-stroke:0;transform:scaleX(0.820);">24.5</div><div class="t" style="left:49.80px;top:380.96px;font-size:6.844px;color:#444;-webkit-text-stroke:0;transform:scaleX(0.820);">58</div><div class="t" style="left:84.80px;top:380.96px;font-size:6.844px;color:#444;-webkit-text-stroke:0;transform:scaleX(0.820);">57</div><div class="t" style="left:114.20px;top:380.96px;font-size:6.844px;color:#444;-webkit-text-stroke:0;transform:scaleX(0.820);">58</div><div class="t" style="left:143.29px;top:380.96px;font-size:6.844px;color:#444;-webkit-text-stroke:0;transform:scaleX(0.820);">36</div><div class="t" style="left:171.79px;top:380.96px;font-size:6.844px;color:#444;-webkit-text-stroke:0;transform:scaleX(0.820);">37</div><div class="t" style="left:215.02px;top:380.96px;font-size:6.844px;color:#444;-webkit-text-stroke:0;transform:scaleX(0.866);">Data phase</div><div class="t" style="left:335.75px;top:380.96px;font-size:6.844px;color:#444;-webkit-text-stroke:0;transform:scaleX(0.820);">23.1</div><div class="t" style="left:49.80px;top:394.91px;font-size:6.844px;color:#444;-webkit-text-stroke:0;transform:scaleX(0.820);">59</div><div class="t" style="left:84.80px;top:394.91px;font-size:6.844px;color:#444;-webkit-text-stroke:0;transform:scaleX(0.820);">58</div><div class="t" style="left:114.20px;top:394.91px;font-size:6.844px;color:#444;-webkit-text-stroke:0;transform:scaleX(0.820);">59</div><div class="t" style="left:143.29px;top:394.91px;font-size:6.844px;color:#444;-webkit-text-stroke:0;transform:scaleX(0.820);">37</div><div class="t" style="left:171.79px;top:394.91px;font-size:6.844px;color:#444;-webkit-text-stroke:0;transform:scaleX(0.820);">38</div><div class="t" style="left:215.02px;top:394.91px;font-size:6.844px;color:#444;-webkit-text-stroke:0;transform:scaleX(0.866);">Data phase</div><div class="t" style="left:335.75px;top:394.91px;font-size:6.844px;color:#444;-webkit-text-stroke:0;transform:scaleX(0.820);">22.3</div><div class="t" style="left:49.75px;top:408.86px;font-size:6.844px;color:#444;-webkit-text-stroke:0;transform:scaleX(0.820);">60</div><div class="t" style="left:84.80px;top:408.86px;font-size:6.844px;color:#444;-webkit-text-stroke:0;transform:scaleX(0.820);">59</div><div class="t" style="left:114.15px;top:408.86px;font-size:6.844px;color:#444;-webkit-text-stroke:0;transform:scaleX(0.820);">60</div><div class="t" style="left:143.29px;top:408.86px;font-size:6.844px;color:#444;-webkit-text-stroke:0;transform:scaleX(0.820);">38</div><div class="t" style="left:171.79px;top:408.86px;font-size:6.844px;color:#444;-webkit-text-stroke:0;transform:scaleX(0.820);">39</div><div class="t" style="left:215.02px;top:408.86px;font-size:6.844px;color:#444;-webkit-text-stroke:0;transform:scaleX(0.866);">Data phase</div><div class="t" style="left:335.75px;top:408.86px;font-size:6.844px;color:#444;-webkit-text-stroke:0;transform:scaleX(0.820);">22.8</div><div class="t" style="left:49.75px;top:422.81px;font-size:6.844px;color:#444;-webkit-text-stroke:0;transform:scaleX(0.820);">61</div><div class="t" style="left:84.75px;top:422.81px;font-size:6.844px;color:#444;-webkit-text-stroke:0;transform:scaleX(0.820);">60</div><div class="t" style="left:114.15px;top:422.81px;font-size:6.844px;color:#444;-webkit-text-stroke:0;transform:scaleX(0.820);">61</div><div class="t" style="left:143.29px;top:422.81px;font-size:6.844px;color:#444;-webkit-text-stroke:0;transform:scaleX(0.820);">39</div><div class="t" style="left:171.88px;top:422.81px;font-size:6.844px;color:#444;-webkit-text-stroke:0;transform:scaleX(0.820);">40</div><div class="t" style="left:215.02px;top:422.81px;font-size:6.844px;color:#444;-webkit-text-stroke:0;transform:scaleX(0.866);">Data phase</div><div class="t" style="left:335.75px;top:422.81px;font-size:6.844px;color:#444;-webkit-text-stroke:0;transform:scaleX(0.820);">22.8</div><div class="t" style="left:49.75px;top:436.76px;font-size:6.844px;color:#444;-webkit-text-stroke:0;transform:scaleX(0.820);">62</div><div class="t" style="left:84.75px;top:436.76px;font-size:6.844px;color:#444;-webkit-text-stroke:0;transform:scaleX(0.820);">61</div><div class="t" style="left:114.15px;top:436.76px;font-size:6.844px;color:#444;-webkit-text-stroke:0;transform:scaleX(0.820);">62</div><div class="t" style="left:143.38px;top:436.76px;font-size:6.844px;color:#444;-webkit-text-stroke:0;transform:scaleX(0.820);">40</div><div class="t" style="left:171.88px;top:436.76px;font-size:6.844px;color:#444;-webkit-text-stroke:0;transform:scaleX(0.820);">41</div><div class="t" style="left:215.02px;top:436.76px;font-size:6.844px;color:#444;-webkit-text-stroke:0;transform:scaleX(0.866);">Data phase</div><div class="t" style="left:335.75px;top:436.76px;font-size:6.844px;color:#444;-webkit-text-stroke:0;transform:scaleX(0.820);">22.8</div><div class="t" style="left:49.75px;top:450.71px;font-size:6.844px;color:#444;-webkit-text-stroke:0;transform:scaleX(0.820);">63</div><div class="t" style="left:84.75px;top:450.71px;font-size:6.844px;color:#444;-webkit-text-stroke:0;transform:scaleX(0.820);">62</div><div class="t" style="left:114.15px;top:450.71px;font-size:6.844px;color:#444;-webkit-text-stroke:0;transform:scaleX(0.820);">63</div><div class="t" style="left:143.38px;top:450.71px;font-size:6.844px;color:#444;-webkit-text-stroke:0;transform:scaleX(0.820);">41</div><div class="t" style="left:171.88px;top:450.71px;font-size:6.844px;color:#444;-webkit-text-stroke:0;transform:scaleX(0.820);">42</div><div class="t" style="left:215.02px;top:450.71px;font-size:6.844px;color:#444;-webkit-text-stroke:0;transform:scaleX(0.866);">Data phase</div><div class="t" style="left:335.75px;top:450.71px;font-size:6.844px;color:#444;-webkit-text-stroke:0;transform:scaleX(0.820);">22.6</div><div class="t" style="left:49.75px;top:464.66px;font-size:6.844px;color:#444;-webkit-text-stroke:0;transform:scaleX(0.820);">64</div><div class="t" style="left:84.75px;top:464.66px;font-size:6.844px;color:#444;-webkit-text-stroke:0;transform:scaleX(0.820);">63</div><div class="t" style="left:114.15px;top:464.66px;font-size:6.844px;color:#444;-webkit-text-stroke:0;transform:scaleX(0.820);">64</div><div class="t" style="left:143.38px;top:464.66px;font-size:6.844px;color:#444;-webkit-text-stroke:0;transform:scaleX(0.820);">42</div><div class="t" style="left:171.88px;top:464.66px;font-size:6.844px;color:#444;-webkit-text-stroke:0;transform:scaleX(0.820);">43</div><div class="t" style="left:215.02px;top:464.66px;font-size:6.844px;color:#444;-webkit-text-stroke:0;transform:scaleX(0.866);">Data phase</div><div class="t" style="left:335.75px;top:464.66px;font-size:6.844px;color:#444;-webkit-text-stroke:0;transform:scaleX(0.820);">22.4</div><div class="ab" style="left:345px;top:334px;width:11px;height:141px;background:#fff"></div><svg style="left:0;top:0" width="1" height="1"><path d="M346.8,469.8 l2.2,2 l2.2,-2" fill="none" stroke="#c0c0c0" stroke-width="0.7"/><path d="M348,356 h2 M348,357.5 h2 M348,359 h2" stroke="#aaa" stroke-width="0.5"/></svg><div class="ab" style="left:366px;top:272.5px;width:140.5px;height:20.5px;background:#fff;"></div><div class="ab" style="left:506.5px;top:272.7px;width:141.5px;height:20px;background:#c8c8c8;"></div><div class="ab" style="left:368px;top:293px;width:138.5px;height:0.8px;background:#e2e2e2;"></div><div class="t" style="left:371.44px;top:280.34px;font-size:6.564px;color:#a2121f;font-weight:bold;transform:scaleX(0.896);">myTABLE Standard Q<span style="font-size:65%;vertical-align:-1px">3</span></div><svg style="left:0;top:0" width="1" height="1"><path d="M495.9,281.4 L499.5,285.0 M499.5,281.4 L495.9,285.0" stroke="#222" stroke-width="1.2"/></svg><div class="t" style="left:512.47px;top:280.98px;font-size:6.285px;color:#333;transform:scaleX(0.865);">EVENTS</div><svg style="left:0;top:0" width="653" height="479"><rect x="372" y="298.5" width="19" height="18" fill="none" stroke="#e8e8e8" stroke-width="0.6" stroke-dasharray="0.8,0.8"/><rect x="392" y="298.5" width="9" height="18" fill="none" stroke="#e8e8e8" stroke-width="0.6" stroke-dasharray="0.8,0.8"/><rect x="406" y="298.5" width="22" height="18" fill="none" stroke="#e8e8e8" stroke-width="0.6" stroke-dasharray="0.8,0.8"/><rect x="429" y="298.5" width="20" height="18" fill="none" stroke="#e8e8e8" stroke-width="0.6" stroke-dasharray="0.8,0.8"/><rect x="450" y="298.5" width="21" height="18" fill="none" stroke="#e8e8e8" stroke-width="0.6" stroke-dasharray="0.8,0.8"/><rect x="474" y="298.5" width="19" height="18" fill="none" stroke="#e8e8e8" stroke-width="0.6" stroke-dasharray="0.8,0.8"/><rect x="494" y="298.5" width="10" height="18" fill="none" stroke="#e8e8e8" stroke-width="0.6" stroke-dasharray="0.8,0.8"/><rect x="509" y="298.5" width="21" height="18" fill="none" stroke="#e8e8e8" stroke-width="0.6" stroke-dasharray="0.8,0.8"/><rect x="531" y="298.5" width="20" height="18" fill="none" stroke="#e8e8e8" stroke-width="0.6" stroke-dasharray="0.8,0.8"/><rect x="552" y="298.5" width="20" height="18" fill="none" stroke="#e8e8e8" stroke-width="0.6" stroke-dasharray="0.8,0.8"/><line x1="404" y1="301" x2="404" y2="315" stroke="#e0e0e0" stroke-width="0.6" stroke-dasharray="0.8,0.8"/><path d="M376.5,301.5 h8.5 l2,2 v9.5 h-10.5z" fill="none" stroke="#222" stroke-width="1.1"/><rect x="378.8" y="301.5" width="5.5" height="3.2" fill="none" stroke="#222" stroke-width="0.8"/><rect x="378.5" y="308" width="6.5" height="5" fill="none" stroke="#222" stroke-width="0.8"/><rect x="383" y="301.7" width="1.8" height="1.8" fill="#a2121f"/><path d="M395,306 h3.6 l-1.8,2.3z" fill="#222"/><rect x="410.8" y="301.6" width="11.8" height="11.8" fill="none" stroke="#a2121f" stroke-width="1.3" stroke-dasharray="2.4,1.3"/><path d="M433.5,301.5 h6 v2 M433.5,301.5 v10 h2" fill="none" stroke="#cdcdcd" stroke-width="0.9"/><path d="M436,304 h6.5 l2,2 v8 h-8.5z" fill="#fff" stroke="#cdcdcd" stroke-width="0.9"/><circle cx="460.2" cy="307.4" r="6.8" fill="none" stroke="#222" stroke-width="1.2"/><path d="M457.5,304.7 l5.4,5.4 M462.9,304.7 l-5.4,5.4" stroke="#a2121f" stroke-width="1.6"/><polygon points="487.68,306.28 487.49,307.22 485.89,307.45 485.51,308.02 485.91,309.59 485.11,310.12 483.82,309.15 483.14,309.28 482.32,310.68 481.38,310.49 481.15,308.89 480.58,308.51 479.01,308.91 478.48,308.11 479.45,306.82 479.32,306.14 477.92,305.32 478.11,304.38 479.71,304.15 480.09,303.58 479.69,302.01 480.49,301.48 481.78,302.45 482.46,302.32 483.28,300.92 484.22,301.11 484.45,302.71 485.02,303.09 486.59,302.69 487.12,303.49 486.15,304.78 486.28,305.46" fill="none" stroke="#222" stroke-width="1.3" stroke-linejoin="round"/><circle cx="482.8" cy="305.8" r="1.5" fill="none" stroke="#222" stroke-width="1.3"/><path d="M486,312 l4,-4" stroke="#a2121f" stroke-width="1.6"/><path d="M497.8,306 h3.6 l-1.8,2.3z" fill="#222"/><circle cx="520.5" cy="304.6" r="3.8" fill="none" stroke="#222" stroke-width="1.2"/><path d="M517.8,307.5 l-4,4" stroke="#777" stroke-width="1.8"/><path d="M522.5,310.5 h3 M524,309 v3" stroke="#a2121f" stroke-width="1"/><circle cx="542" cy="304.6" r="3.8" fill="none" stroke="#222" stroke-width="1.2"/><path d="M539.3,307.5 l-4,4" stroke="#777" stroke-width="1.8"/><path d="M543.8,310.5 h3.2" stroke="#a2121f" stroke-width="1.1"/><circle cx="563" cy="304.6" r="3.8" fill="none" stroke="#cdcdcd" stroke-width="1"/><path d="M560.3,307.5 l-4,4" stroke="#cdcdcd" stroke-width="1.5"/><path d="M565.5,309.8 l2,2 M567.5,309.8 l-2,2" stroke="#e8b0b5" stroke-width="0.7"/><rect x="373" y="332.8" width="262.5" height="1.5" fill="#b4b4b4"/><rect x="373" y="336.2" width="262.5" height="0.6" fill="#e4e4e4"/><rect x="373" y="350.60" width="262.5" height="0.8" fill="#d6d6d6"/><rect x="373" y="364.52" width="262.5" height="0.8" fill="#d6d6d6"/><rect x="373" y="378.44" width="262.5" height="0.8" fill="#d6d6d6"/><rect x="373" y="392.36" width="262.5" height="0.8" fill="#d6d6d6"/><rect x="373" y="406.28" width="262.5" height="0.8" fill="#d6d6d6"/><rect x="373" y="420.20" width="262.5" height="0.8" fill="#d6d6d6"/><rect x="373" y="434.12" width="262.5" height="0.8" fill="#d6d6d6"/><rect x="373" y="448.04" width="262.5" height="0.8" fill="#d6d6d6"/><rect x="373" y="461.96" width="262.5" height="0.8" fill="#d6d6d6"/><rect x="373" y="475.88" width="262.5" height="0.8" fill="#d6d6d6"/><path d="M637,322 l2.3,-2 l2.3,2" fill="none" stroke="#c0c0c0" stroke-width="0.7"/><path d="M637.5,469 l2.3,2 l2.3,-2" fill="none" stroke="#c0c0c0" stroke-width="0.7"/><path d="M638.3,453 v4" stroke="#888" stroke-width="0.6"/><path d="M378.5,474.5 l-1.5,1.8 l1.5,1.8" fill="none" stroke="#bbb" stroke-width="0.7"/><path d="M630.5,474.5 l1.5,1.8 l-1.5,1.8" fill="none" stroke="#bbb" stroke-width="0.7"/><rect x="381" y="475.5" width="233" height="2.6" fill="#c4c4c4"/></svg><div class="t" style="left:373.41px;top:322.66px;font-size:6.425px;color:#2e2e2e;transform:scaleX(0.915);">Time</div><div class="t" style="left:424.16px;top:322.83px;font-size:6.704px;color:#2e2e2e;transform:scaleX(0.856);">x<span style="font-size:72%;vertical-align:-1px">10,3</span> / µm</div><div class="t" style="left:462.96px;top:322.83px;font-size:6.704px;color:#2e2e2e;transform:scaleX(0.869);">x<span style="font-size:72%;vertical-align:-1px">16,3</span> / µm</div><div class="t" style="left:502.26px;top:322.83px;font-size:6.704px;color:#2e2e2e;transform:scaleX(0.872);">x<span style="font-size:72%;vertical-align:-1px">50,3</span> / µm</div><div class="t" style="left:540.96px;top:322.83px;font-size:6.704px;color:#2e2e2e;transform:scaleX(0.885);">x<span style="font-size:72%;vertical-align:-1px">84,3</span> / µm</div><div class="t" style="left:580.76px;top:322.83px;font-size:6.704px;color:#2e2e2e;transform:scaleX(0.856);">x<span style="font-size:72%;vertical-align:-1px">90,3</span> / µm</div><div class="t" style="left:621.49px;top:322.66px;font-size:6.425px;color:#2e2e2e;transform:scaleX(1.027);">Copt</div><div class="t" style="left:372.70px;top:341.36px;font-size:6.844px;color:#444;-webkit-text-stroke:0;transform:scaleX(0.808);">11:47:22.3269</div><div class="t" style="left:435.36px;top:341.36px;font-size:6.844px;color:#444;-webkit-text-stroke:0;transform:scaleX(0.850);">30.96</div><div class="t" style="left:474.50px;top:341.36px;font-size:6.844px;color:#444;-webkit-text-stroke:0;transform:scaleX(0.850);">34.47</div><div class="t" style="left:513.86px;top:341.36px;font-size:6.844px;color:#444;-webkit-text-stroke:0;transform:scaleX(0.850);">49.13</div><div class="t" style="left:552.90px;top:341.36px;font-size:6.844px;color:#444;-webkit-text-stroke:0;transform:scaleX(0.850);">90.82</div><div class="t" style="left:588.73px;top:341.36px;font-size:6.844px;color:#444;-webkit-text-stroke:0;transform:scaleX(0.850);">120.60</div><div class="ab" style="left:634.2px;top:344.65px;width:1.6px;height:0.8px;background:#555"></div><div class="t" style="left:372.70px;top:355.28px;font-size:6.844px;color:#444;-webkit-text-stroke:0;transform:scaleX(0.808);">11:47:22.3279</div><div class="t" style="left:435.40px;top:355.28px;font-size:6.844px;color:#444;-webkit-text-stroke:0;transform:scaleX(0.850);">30.22</div><div class="t" style="left:474.50px;top:355.28px;font-size:6.844px;color:#444;-webkit-text-stroke:0;transform:scaleX(0.850);">33.49</div><div class="t" style="left:513.78px;top:355.28px;font-size:6.844px;color:#444;-webkit-text-stroke:0;transform:scaleX(0.850);">48.74</div><div class="t" style="left:552.90px;top:355.28px;font-size:6.844px;color:#444;-webkit-text-stroke:0;transform:scaleX(0.850);">66.41</div><div class="t" style="left:591.88px;top:355.28px;font-size:6.844px;color:#444;-webkit-text-stroke:0;transform:scaleX(0.850);">73.44</div><div class="ab" style="left:634.2px;top:358.57px;width:1.6px;height:0.8px;background:#555"></div><div class="t" style="left:372.70px;top:369.20px;font-size:6.844px;color:#444;-webkit-text-stroke:0;transform:scaleX(0.808);">11:47:22.3289</div><div class="t" style="left:435.40px;top:369.20px;font-size:6.844px;color:#444;-webkit-text-stroke:0;transform:scaleX(0.850);">30.17</div><div class="t" style="left:474.50px;top:369.20px;font-size:6.844px;color:#444;-webkit-text-stroke:0;transform:scaleX(0.850);">33.42</div><div class="t" style="left:513.78px;top:369.20px;font-size:6.844px;color:#444;-webkit-text-stroke:0;transform:scaleX(0.850);">48.04</div><div class="t" style="left:552.86px;top:369.20px;font-size:6.844px;color:#444;-webkit-text-stroke:0;transform:scaleX(0.850);">64.85</div><div class="t" style="left:591.88px;top:369.20px;font-size:6.844px;color:#444;-webkit-text-stroke:0;transform:scaleX(0.850);">71.34</div><div class="ab" style="left:634.2px;top:372.49px;width:1.6px;height:0.8px;background:#555"></div><div class="t" style="left:372.70px;top:383.12px;font-size:6.844px;color:#444;-webkit-text-stroke:0;transform:scaleX(0.808);">11:47:22.3299</div><div class="t" style="left:435.36px;top:383.12px;font-size:6.844px;color:#444;-webkit-text-stroke:0;transform:scaleX(0.850);">30.23</div><div class="t" style="left:474.38px;top:383.12px;font-size:6.844px;color:#444;-webkit-text-stroke:0;transform:scaleX(0.850);">33.74</div><div class="t" style="left:513.86px;top:383.12px;font-size:6.844px;color:#444;-webkit-text-stroke:0;transform:scaleX(0.850);">48.05</div><div class="t" style="left:552.90px;top:383.12px;font-size:6.844px;color:#444;-webkit-text-stroke:0;transform:scaleX(0.850);">64.27</div><div class="t" style="left:591.96px;top:383.12px;font-size:6.844px;color:#444;-webkit-text-stroke:0;transform:scaleX(0.850);">77.46</div><div class="t" style="left:372.70px;top:397.04px;font-size:6.844px;color:#444;-webkit-text-stroke:0;transform:scaleX(0.808);">11:47:22.3309</div><div class="t" style="left:435.28px;top:397.04px;font-size:6.844px;color:#444;-webkit-text-stroke:0;transform:scaleX(0.850);">30.44</div><div class="t" style="left:474.46px;top:397.04px;font-size:6.844px;color:#444;-webkit-text-stroke:0;transform:scaleX(0.850);">33.66</div><div class="t" style="left:513.86px;top:397.04px;font-size:6.844px;color:#444;-webkit-text-stroke:0;transform:scaleX(0.850);">48.20</div><div class="t" style="left:552.90px;top:397.04px;font-size:6.844px;color:#444;-webkit-text-stroke:0;transform:scaleX(0.850);">65.07</div><div class="t" style="left:592.00px;top:397.04px;font-size:6.844px;color:#444;-webkit-text-stroke:0;transform:scaleX(0.850);">70.89</div><div class="ab" style="left:634.2px;top:400.33px;width:1.6px;height:0.8px;background:#555"></div><div class="t" style="left:372.70px;top:410.96px;font-size:6.844px;color:#444;-webkit-text-stroke:0;transform:scaleX(0.808);">11:47:22.3319</div><div class="t" style="left:435.40px;top:410.96px;font-size:6.844px;color:#444;-webkit-text-stroke:0;transform:scaleX(0.850);">29.79</div><div class="t" style="left:474.46px;top:410.96px;font-size:6.844px;color:#444;-webkit-text-stroke:0;transform:scaleX(0.850);">33.40</div><div class="t" style="left:513.86px;top:410.96px;font-size:6.844px;color:#444;-webkit-text-stroke:0;transform:scaleX(0.850);">48.78</div><div class="t" style="left:552.86px;top:410.96px;font-size:6.844px;color:#444;-webkit-text-stroke:0;transform:scaleX(0.850);">65.33</div><div class="t" style="left:591.96px;top:410.96px;font-size:6.844px;color:#444;-webkit-text-stroke:0;transform:scaleX(0.850);">70.55</div><div class="ab" style="left:634.2px;top:414.25px;width:1.6px;height:0.8px;background:#555"></div><div class="t" style="left:372.70px;top:424.88px;font-size:6.844px;color:#444;-webkit-text-stroke:0;transform:scaleX(0.808);">11:47:22.3329</div><div class="t" style="left:435.36px;top:424.88px;font-size:6.844px;color:#444;-webkit-text-stroke:0;transform:scaleX(0.850);">30.96</div><div class="t" style="left:474.46px;top:424.88px;font-size:6.844px;color:#444;-webkit-text-stroke:0;transform:scaleX(0.850);">34.06</div><div class="t" style="left:513.86px;top:424.88px;font-size:6.844px;color:#444;-webkit-text-stroke:0;transform:scaleX(0.850);">47.93</div><div class="t" style="left:552.90px;top:424.88px;font-size:6.844px;color:#444;-webkit-text-stroke:0;transform:scaleX(0.850);">64.39</div><div class="t" style="left:591.88px;top:424.88px;font-size:6.844px;color:#444;-webkit-text-stroke:0;transform:scaleX(0.850);">69.64</div><div class="ab" style="left:634.2px;top:428.17px;width:1.6px;height:0.8px;background:#555"></div><div class="t" style="left:372.70px;top:438.80px;font-size:6.844px;color:#444;-webkit-text-stroke:0;transform:scaleX(0.808);">11:47:22.3339</div><div class="t" style="left:435.36px;top:438.80px;font-size:6.844px;color:#444;-webkit-text-stroke:0;transform:scaleX(0.850);">30.98</div><div class="t" style="left:474.38px;top:438.80px;font-size:6.844px;color:#444;-webkit-text-stroke:0;transform:scaleX(0.850);">34.34</div><div class="t" style="left:513.86px;top:438.80px;font-size:6.844px;color:#444;-webkit-text-stroke:0;transform:scaleX(0.850);">49.10</div><div class="t" style="left:552.86px;top:438.80px;font-size:6.844px;color:#444;-webkit-text-stroke:0;transform:scaleX(0.850);">66.60</div><div class="t" style="left:592.00px;top:438.80px;font-size:6.844px;color:#444;-webkit-text-stroke:0;transform:scaleX(0.850);">72.32</div><div class="ab" style="left:634.2px;top:442.09px;width:1.6px;height:0.8px;background:#555"></div><div class="t" style="left:372.70px;top:452.72px;font-size:6.844px;color:#444;-webkit-text-stroke:0;transform:scaleX(0.808);">11:47:22.3349</div><div class="t" style="left:435.36px;top:452.72px;font-size:6.844px;color:#444;-webkit-text-stroke:0;transform:scaleX(0.850);">31.05</div><div class="t" style="left:474.46px;top:452.72px;font-size:6.844px;color:#444;-webkit-text-stroke:0;transform:scaleX(0.850);">34.55</div><div class="t" style="left:513.90px;top:452.72px;font-size:6.844px;color:#444;-webkit-text-stroke:0;transform:scaleX(0.850);">48.21</div><div class="t" style="left:552.90px;top:452.72px;font-size:6.844px;color:#444;-webkit-text-stroke:0;transform:scaleX(0.850);">64.29</div><div class="t" style="left:591.96px;top:452.72px;font-size:6.844px;color:#444;-webkit-text-stroke:0;transform:scaleX(0.850);">69.38</div><div class="ab" style="left:634.2px;top:456.01px;width:1.6px;height:0.8px;background:#555"></div><div class="t" style="left:372.70px;top:466.64px;font-size:6.844px;color:#444;-webkit-text-stroke:0;transform:scaleX(0.808);">11:47:22.3359</div><div class="t" style="left:435.36px;top:466.64px;font-size:6.844px;color:#444;-webkit-text-stroke:0;transform:scaleX(0.850);">31.55</div><div class="t" style="left:474.46px;top:466.64px;font-size:6.844px;color:#444;-webkit-text-stroke:0;transform:scaleX(0.850);">34.60</div><div class="t" style="left:513.90px;top:466.64px;font-size:6.844px;color:#444;-webkit-text-stroke:0;transform:scaleX(0.850);">49.17</div><div class="t" style="left:552.90px;top:466.64px;font-size:6.844px;color:#444;-webkit-text-stroke:0;transform:scaleX(0.850);">64.41</div><div class="t" style="left:592.00px;top:466.64px;font-size:6.844px;color:#444;-webkit-text-stroke:0;transform:scaleX(0.850);">69.89</div></body></html>
